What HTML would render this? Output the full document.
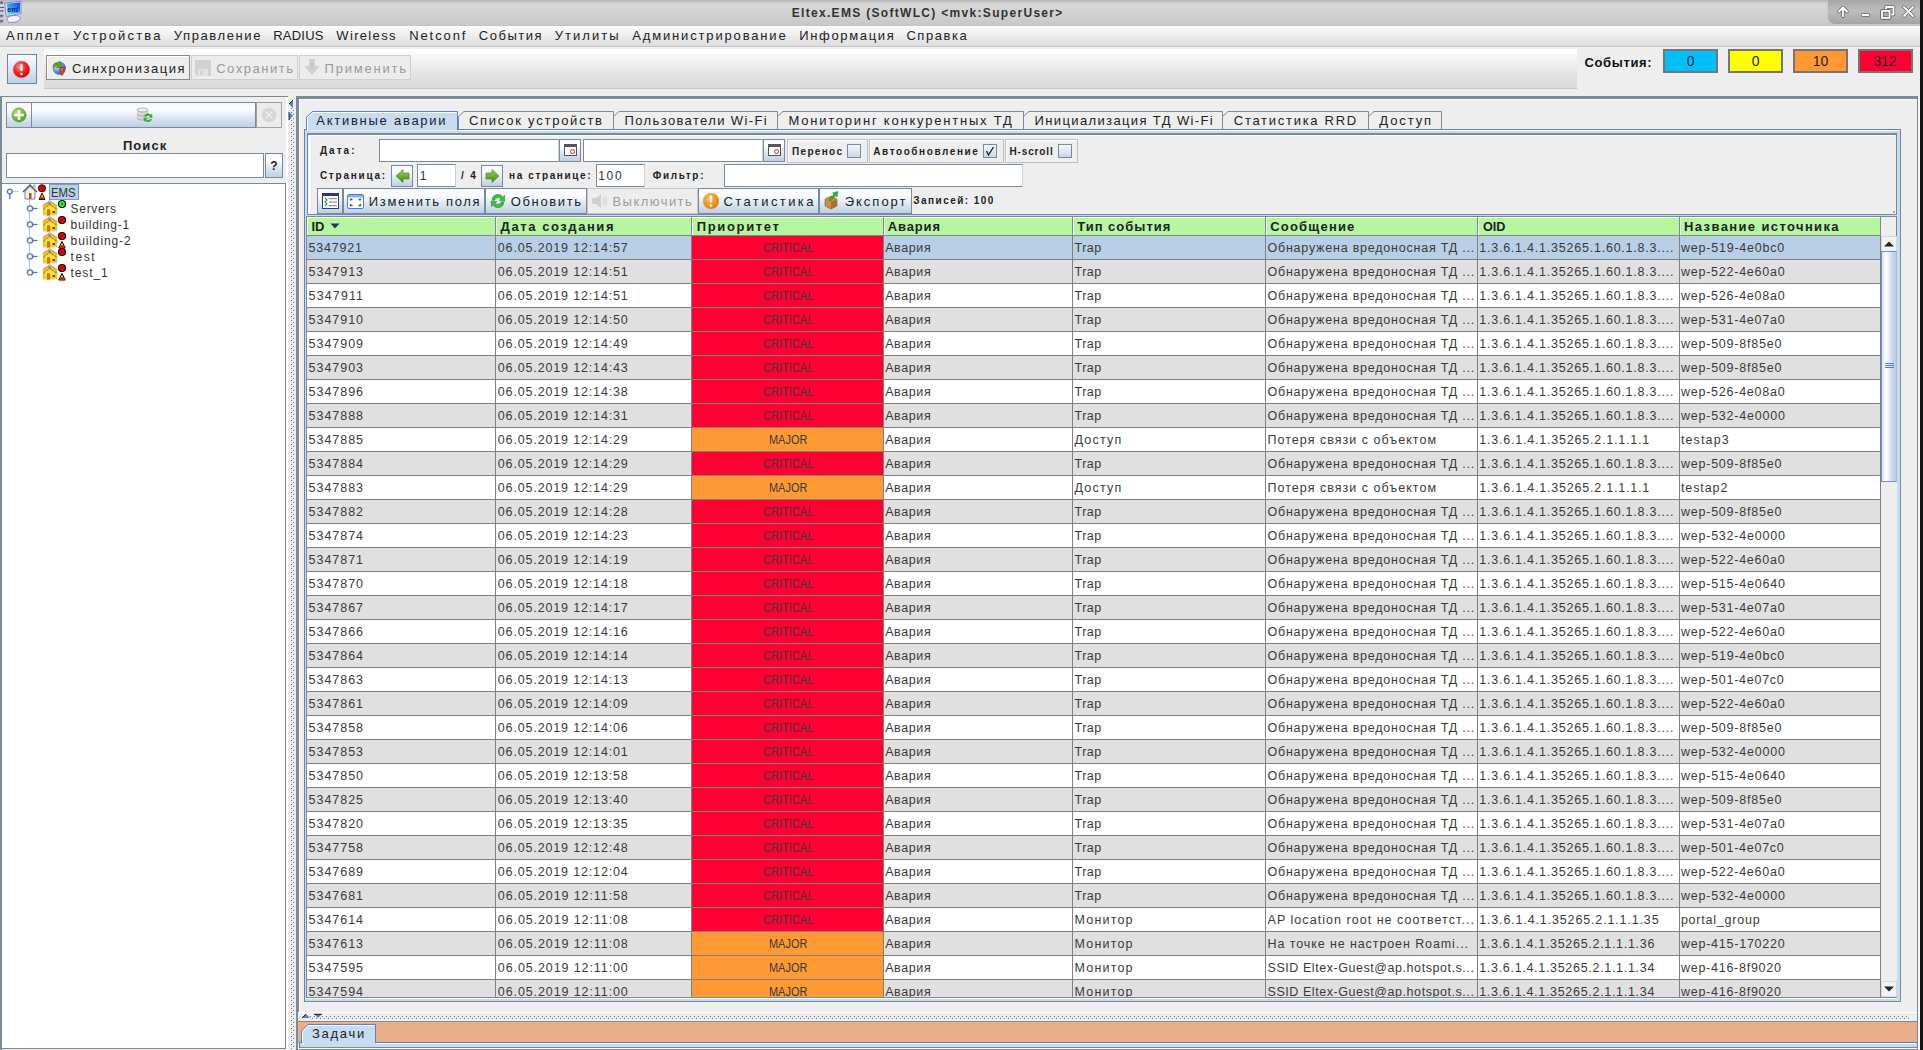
<!DOCTYPE html>
<html><head><meta charset="utf-8"><style>
html,body{margin:0;padding:0;}
body{width:1923px;height:1050px;overflow:hidden;background:#eeeeee;font-family:"Liberation Sans",sans-serif;}
#r{position:relative;width:1923px;height:1050px;overflow:hidden;background:#eeeeee;}
#r div{position:absolute;box-sizing:border-box;}
#r .t{white-space:pre;font-family:"Liberation Sans",sans-serif;}
</style></head><body><div id="r">
<div style="left:0px;top:0px;width:1923px;height:26px;background:linear-gradient(#b4b4b4 0px,#d8d8d8 4px,#d3d3d3 12px,#c8c8c8 25px,#c4c4c4 26px)"></div>
<svg style="position:absolute;left:0;top:0" width="24" height="26" viewBox="0 0 24 26">
<defs><linearGradient id="scr" x1="1" y1="0" x2="0" y2="1"><stop offset="0" stop-color="#0048e0"/><stop offset="0.6" stop-color="#30a8ff"/><stop offset="1" stop-color="#70e8ff"/></linearGradient></defs>
<text transform="translate(0.2,1) rotate(90)" font-size="6.2" font-weight="bold" fill="#383868" font-family="Liberation Sans" textLength="22" lengthAdjust="spacing">eltex</text>
<path d="M7 18.5 Q9 15.5 14 15.5 Q20 15.5 20.5 17.8 Q19 22.5 11 22.5 Q6.5 22.3 7 18.5 Z" fill="#f2f2ff" stroke="#8484c8" stroke-width="0.9"/>
<path d="M4.6 3.2 L21 1.2 L21 13.5 L6.2 16.5 Z" fill="#dcdcf8" stroke="#7c7cc4" stroke-width="0.9"/>
<path d="M7 3.8 L20 2.4 L20 12.6 L7.6 14.8 Z" fill="url(#scr)"/>
<text x="7.2" y="12.2" font-size="7.5" font-weight="bold" fill="#102058" font-family="Liberation Sans">em</text>
<text x="17" y="8.5" font-size="4" font-weight="bold" fill="#102058" font-family="Liberation Sans">s</text>
</svg>
<div class="t" style="left:791.70px;top:3px;font-size:12px;line-height:20px;color:#333;font-weight:bold;letter-spacing:1.312px;">Eltex.EMS (SoftWLC) &lt;mvk:SuperUser&gt;</div>
<div style="left:1828px;top:0px;width:92px;height:24px;background:linear-gradient(#a6a6a6,#bdbdbd 45%,#a4a4a4);border-bottom-left-radius:7px;box-shadow:-1px 1px 0 #c9c9c9"></div>
<svg style="position:absolute;left:1828px;top:0" width="92" height="24" viewBox="0 0 92 24">
<g fill="none" stroke="#6a6a6a" stroke-width="3.4" stroke-linejoin="round" stroke-linecap="round">
<path d="M15 16.2 V8.5 M11 11.5 L15 7.5 L19 11.5"/><path d="M34.5 15 H40.5"/>
<rect x="58" y="7" width="7.5" height="7.5"/><rect x="54" y="11" width="7.5" height="7"/>
<path d="M76 7 L85 16 M85 7 L76 16"/></g>
<g fill="none" stroke="#fff" stroke-width="1.8" stroke-linejoin="round" stroke-linecap="round">
<path d="M15 16.2 V8.5 M11 11.5 L15 7.5 L19 11.5"/><path d="M34.5 15 H40.5"/>
<rect x="58" y="7" width="7.5" height="7.5"/></g>
<rect x="54" y="11" width="7.5" height="7" fill="#b0b0b0" stroke="#6a6a6a" stroke-width="3.4" stroke-linejoin="round"/>
<rect x="54" y="11" width="7.5" height="7" fill="none" stroke="#fff" stroke-width="1.8"/>
<path d="M76 7 L85 16 M85 7 L76 16" fill="none" stroke="#fff" stroke-width="1.9" stroke-linecap="round"/>
</svg>
<div style="left:1920px;top:0px;width:3px;height:1050px;background:#141414"></div>
<div style="left:0px;top:26px;width:1920px;height:20px;background:linear-gradient(#fefefe,#f2f2f2 35%,#e6e6e6 70%,#dddddd)"></div>
<div style="left:0px;top:46px;width:1920px;height:1px;background:#c4c4c4"></div>
<div style="left:0px;top:47px;width:1920px;height:1px;background:#f4f4f4"></div>
<div class="t" style="left:6.00px;top:26px;font-size:13px;line-height:20px;color:#222;letter-spacing:2.021px;">Апплет</div>
<div class="t" style="left:72.90px;top:26px;font-size:13px;line-height:20px;color:#222;letter-spacing:2.172px;">Устройства</div>
<div class="t" style="left:173.70px;top:26px;font-size:13px;line-height:20px;color:#222;letter-spacing:1.613px;">Управление</div>
<div class="t" style="left:273.20px;top:26px;font-size:13px;line-height:20px;color:#222;letter-spacing:0.232px;">RADIUS</div>
<div class="t" style="left:336.30px;top:26px;font-size:13px;line-height:20px;color:#222;letter-spacing:1.335px;">Wireless</div>
<div class="t" style="left:409.20px;top:26px;font-size:13px;line-height:20px;color:#222;letter-spacing:1.908px;">Netconf</div>
<div class="t" style="left:478.70px;top:26px;font-size:13px;line-height:20px;color:#222;letter-spacing:1.552px;">События</div>
<div class="t" style="left:554.80px;top:26px;font-size:13px;line-height:20px;color:#222;letter-spacing:2.032px;">Утилиты</div>
<div class="t" style="left:632.20px;top:26px;font-size:13px;line-height:20px;color:#222;letter-spacing:1.847px;">Администрирование</div>
<div class="t" style="left:799.30px;top:26px;font-size:13px;line-height:20px;color:#222;letter-spacing:1.642px;">Информация</div>
<div class="t" style="left:906.40px;top:26px;font-size:13px;line-height:20px;color:#222;letter-spacing:1.546px;">Справка</div>
<div style="left:7px;top:54px;width:30px;height:30px;border:1px solid #6e84a0;background:linear-gradient(#f7fafd,#e4edf6 40%,#bcd0e6)"></div>
<svg style="position:absolute;left:12px;top:60px" width="19" height="19" viewBox="0 0 19 19">
<defs><radialGradient id="rg" cx="0.4" cy="0.35" r="0.7"><stop offset="0" stop-color="#ff9a9a"/><stop offset="0.5" stop-color="#f02828"/><stop offset="1" stop-color="#c80000"/></radialGradient></defs>
<circle cx="9.5" cy="9.5" r="8.3" fill="url(#rg)" stroke="#e06060" stroke-width="0.6"/>
<rect x="8.4" y="4" width="2.2" height="7" rx="1" fill="#fff"/><circle cx="9.5" cy="14" r="1.3" fill="#fff"/></svg>
<div style="left:44px;top:49px;width:1533px;height:40px;background:linear-gradient(#ffffff,#f2f2f2 30%,#e4e4e4 62%,#dadada 95%,#e8e8e8)"></div>
<div style="left:44px;top:88px;width:1533px;height:1px;background:#c6c6c6"></div>
<div style="left:46px;top:55px;width:144px;height:25px;border:1px solid #8a8a8a;background:#ededed;box-shadow:inset 1px 1px 0 #fff"></div>
<svg style="position:absolute;left:51px;top:59px" width="17" height="17" viewBox="0 0 17 17">
<defs><radialGradient id="gb" cx="0.35" cy="0.35" r="0.75"><stop offset="0" stop-color="#dfe8f8"/><stop offset="0.6" stop-color="#5f86c8"/><stop offset="1" stop-color="#2f4f90"/></radialGradient></defs>
<circle cx="8.2" cy="9.2" r="6.6" fill="url(#gb)"/>
<path d="M2 7.5 Q2.5 3 7 4.2 L9 2.2 L11.3 8.6 L5 8.6 L7 6.6 Q4.5 5.8 3.3 8 Z" fill="#58a818" stroke="#386808" stroke-width="0.5"/>
<path d="M9 8.6 L14.2 8.6 L12 11 Q14.5 13.5 11 16.5 L10 15.6 Q11.8 13 10.2 12 L9 13.5 Z" fill="#f06030" stroke="#901818" stroke-width="0.6"/></svg>
<div class="t" style="left:72.00px;top:59px;font-size:13px;line-height:20px;color:#222;letter-spacing:1.535px;">Синхронизация</div>
<div style="left:191px;top:55px;width:107px;height:25px;border:1px solid #cfcfcf;background:#ececec"></div>
<svg style="position:absolute;left:195px;top:60px" width="16" height="16" viewBox="0 0 16 16">
<path d="M0 0 H16 V16 H2 L0 14 Z" fill="#d2d2d2"/><rect x="3" y="9" width="10" height="7" fill="#e2e2e2"/><rect x="5" y="11" width="2" height="4" fill="#cfcfcf"/></svg>
<div class="t" style="left:216.20px;top:59px;font-size:13px;line-height:20px;color:#9a9a9a;letter-spacing:1.524px;">Сохранить</div>
<div style="left:299px;top:55px;width:112px;height:25px;border:1px solid #cfcfcf;background:#ececec"></div>
<svg style="position:absolute;left:303px;top:59px" width="18" height="17" viewBox="0 0 18 17">
<path d="M6 0 H12 V7 H17 L9 16 L1 7 H6 Z" fill="#d0d0d0"/><rect x="8.5" y="3" width="1" height="7" fill="#bbb"/></svg>
<div class="t" style="left:324.60px;top:59px;font-size:13px;line-height:20px;color:#9a9a9a;letter-spacing:1.782px;">Применить</div>
<div class="t" style="left:1584.60px;top:53px;font-size:13px;line-height:20px;color:#111;font-weight:bold;letter-spacing:0.596px;">События:</div>
<div style="left:1663px;top:49px;width:55px;height:24px;border:2px solid #777574;background:#00bfff"></div>
<div class="t" style="left:1686.80px;top:51px;font-size:14px;line-height:20px;color:#1a2626;font-family:"Liberation Mono",monospace;">0</div>
<div style="left:1728px;top:49px;width:55px;height:24px;border:2px solid #777574;background:#ffff00"></div>
<div class="t" style="left:1751.80px;top:51px;font-size:14px;line-height:20px;color:#1a2626;font-family:"Liberation Mono",monospace;">0</div>
<div style="left:1793px;top:49px;width:55px;height:24px;border:2px solid #777574;background:#ff9933"></div>
<div class="t" style="left:1812.70px;top:51px;font-size:14px;line-height:20px;color:#1a2626;font-family:"Liberation Mono",monospace;transform:scaleX(0.9881);transform-origin:0 0;">10</div>
<div style="left:1858px;top:49px;width:55px;height:24px;border:2px solid #777574;background:#ff0033"></div>
<div class="t" style="left:1873.30px;top:51px;font-size:14px;line-height:20px;color:#1a2626;font-family:"Liberation Mono",monospace;letter-spacing:0.100px;">312</div>
<div style="left:0px;top:96px;width:288px;height:1px;background:#7a8a99"></div>
<div style="left:0px;top:96px;width:2px;height:954px;background:#7a8a99"></div>
<div style="left:6px;top:102px;width:26px;height:26px;border:1px solid #7a8a99;background:linear-gradient(#f4f7fb,#ffffff 25%,#dde7f2 60%,#bdd0e5);"></div>
<svg style="position:absolute;left:11px;top:107px" width="16" height="16" viewBox="0 0 16 16">
<defs><radialGradient id="gg" cx="0.4" cy="0.35" r="0.7"><stop offset="0" stop-color="#b8e878"/><stop offset="1" stop-color="#4a9a18"/></radialGradient></defs>
<circle cx="8" cy="8" r="7.2" fill="url(#gg)" stroke="#5a8a38" stroke-width="0.7" stroke-dasharray="1 1"/>
<rect x="6.8" y="3.2" width="2.4" height="9.6" fill="#fff"/><rect x="3.2" y="6.8" width="9.6" height="2.4" fill="#fff"/></svg>
<div style="left:31px;top:102px;width:225px;height:26px;border:1px solid #7a8a99;background:linear-gradient(#f4f7fb,#ffffff 25%,#dde7f2 60%,#bdd0e5);"></div>
<svg style="position:absolute;left:136px;top:106px" width="17" height="18" viewBox="0 0 17 18">
<g fill="#d8d8d8" stroke="#909090" stroke-width="0.7"><ellipse cx="6.5" cy="12" rx="5.5" ry="2"/><rect x="1" y="8" width="11" height="4" stroke="none"/><ellipse cx="6.5" cy="8" rx="5.5" ry="2"/>
<rect x="1" y="4" width="11" height="4" stroke="none"/><ellipse cx="6.5" cy="4" rx="5.5" ry="2" fill="#f0f0f0"/></g>
<path d="M8 10 A4 4 0 0 1 15 9 L16 7 L16.5 12 L12 11.5 L14 10.5 A2.5 2.5 0 0 0 10 11 Z" fill="#3ab030"/>
<path d="M16 13 A4 4 0 0 1 9 14.5 L8 16.5 L7.5 11.5 L12 12 L10 13.2 A2.5 2.5 0 0 0 14 13 Z" fill="#3ab030"/></svg>
<div style="left:256px;top:102px;width:26px;height:26px;border:1px solid #a0a0a0;background:#ececec"></div>
<svg style="position:absolute;left:260.5px;top:107px" width="16" height="16" viewBox="0 0 16 16">
<circle cx="8" cy="8" r="7.3" fill="#d6d6d6"/><path d="M5 4 L8 7 L11 4 L12 5 L9 8 L12 11 L11 12 L8 9 L5 12 L4 11 L7 8 L4 5 Z" fill="#f0f0f0"/></svg>
<div class="t" style="left:122.90px;top:136px;font-size:13px;line-height:20px;color:#222;font-weight:bold;letter-spacing:1.084px;">Поиск</div>
<div style="left:6px;top:153px;width:258px;height:25px;border:1px solid #7a8a99;background:#fff"></div>
<div style="left:265px;top:153px;width:18px;height:25px;border:1px solid #7a8a99;background:linear-gradient(#f4f7fb,#ffffff 25%,#dde7f2 60%,#bdd0e5);"></div>
<div class="t" style="left:270.34px;top:156px;font-size:12px;line-height:20px;color:#222;font-weight:bold;">?</div>
<div style="left:2px;top:183px;width:284px;height:866px;border-top:1px solid #7a8a99;border-right:1px solid #7a8a99;border-bottom:1px solid #7a8a99;background:#fff"></div>
<div style="left:29px;top:199px;width:1px;height:74px;background:#b4c6e6"></div>
<svg style="position:absolute;left:6px;top:188px" width="14" height="12" viewBox="0 0 14 12">
<circle cx="3.8" cy="3.5" r="2.4" fill="none" stroke="#5577bb" stroke-width="1.4"/><rect x="3.1" y="5.5" width="1.4" height="5.5" fill="#5577bb"/>
<rect x="7" y="3" width="6" height="1" fill="#b8c8e8"/></svg>
<svg style="position:absolute;left:26px;top:204px" width="14" height="9" viewBox="0 0 14 9">
<circle cx="4" cy="4.5" r="2.6" fill="#fff" stroke="#5577bb" stroke-width="1.4"/><rect x="6.5" y="3.8" width="4.5" height="1.4" fill="#5577bb"/><rect x="11" y="4" width="2" height="1" fill="#c0d0ea"/></svg>
<svg style="position:absolute;left:26px;top:220px" width="14" height="9" viewBox="0 0 14 9">
<circle cx="4" cy="4.5" r="2.6" fill="#fff" stroke="#5577bb" stroke-width="1.4"/><rect x="6.5" y="3.8" width="4.5" height="1.4" fill="#5577bb"/><rect x="11" y="4" width="2" height="1" fill="#c0d0ea"/></svg>
<svg style="position:absolute;left:26px;top:236px" width="14" height="9" viewBox="0 0 14 9">
<circle cx="4" cy="4.5" r="2.6" fill="#fff" stroke="#5577bb" stroke-width="1.4"/><rect x="6.5" y="3.8" width="4.5" height="1.4" fill="#5577bb"/><rect x="11" y="4" width="2" height="1" fill="#c0d0ea"/></svg>
<svg style="position:absolute;left:26px;top:252px" width="14" height="9" viewBox="0 0 14 9">
<circle cx="4" cy="4.5" r="2.6" fill="#fff" stroke="#5577bb" stroke-width="1.4"/><rect x="6.5" y="3.8" width="4.5" height="1.4" fill="#5577bb"/><rect x="11" y="4" width="2" height="1" fill="#c0d0ea"/></svg>
<svg style="position:absolute;left:26px;top:268px" width="14" height="9" viewBox="0 0 14 9">
<circle cx="4" cy="4.5" r="2.6" fill="#fff" stroke="#5577bb" stroke-width="1.4"/><rect x="6.5" y="3.8" width="4.5" height="1.4" fill="#5577bb"/><rect x="11" y="4" width="2" height="1" fill="#c0d0ea"/></svg>
<svg style="position:absolute;left:22px;top:184px" width="26" height="16" viewBox="0 0 26 16">
<path d="M1 8 L8 1 L15 8" fill="none" stroke="#555" stroke-width="1.3"/><path d="M3 7 L8 2.5 L13 7 L13 15 L3 15 Z" fill="#f4f2ee" stroke="#666" stroke-width="0.8"/>
<rect x="7" y="9" width="2.5" height="6" fill="#b8541c"/><rect x="11.5" y="1" width="1.5" height="4" fill="#eee" stroke="#777" stroke-width="0.5"/>
<circle cx="20" cy="4.3" r="3.6" fill="#ee0000" stroke="#111" stroke-width="1"/><circle cx="20" cy="4.3" r="1" fill="#700"/>
<path d="M17 15.5 L20 9 L23 15.5 Z" fill="#f8c800" stroke="#111" stroke-width="1"/><path d="M17.6 15 L22.4 15 L21.5 13 L18.5 13 Z" fill="#e02020"/></svg>
<div style="left:49px;top:184px;width:30px;height:16px;background:#b8cfe5;border:1px solid #7a9ad0"></div>
<div class="t" style="left:50.50px;top:183px;font-size:12px;line-height:20px;color:#333;transform:scaleX(0.9430);transform-origin:0 0;">EMS</div>
<svg style="position:absolute;left:42px;top:200px" width="26" height="17" viewBox="0 0 26 17">
<path d="M1 5.6 L7.5 1 L15 5.6 L15.3 9.2 L15 15.6 L1 15.6 Z" fill="#ffc200"/>
<path d="M3 7.5 L7.5 4.6 L12.5 8 L12.5 13 L3 13 Z" fill="#ffdc3a"/>
<path d="M0.5 5.6 L7.5 0.8 L15 5.6 M1 9.2 L7.5 4.6 L15.6 9.6" fill="none" stroke="#56679a" stroke-width="0.9" stroke-dasharray="1.1 0.5"/>
<rect x="5" y="9.5" width="3" height="6" fill="#d07010"/><rect x="10.5" y="11" width="2.5" height="2" fill="#2050c0"/><rect x="6.8" y="2.8" width="1.6" height="1.6" fill="#2050c0"/>
<rect x="1.5" y="14.6" width="3" height="0.9" fill="#e8eef8"/><rect x="9" y="14.6" width="5.5" height="0.9" fill="#e8eef8"/>
<circle cx="20" cy="4" r="3.5" fill="#22ff22" stroke="#000" stroke-width="1.1"/><circle cx="20" cy="4" r="1" fill="#0a6a0a"/></svg>
<div class="t" style="left:70.60px;top:199px;font-size:12px;line-height:20px;color:#333;letter-spacing:0.677px;">Servers</div>
<svg style="position:absolute;left:42px;top:216px" width="26" height="17" viewBox="0 0 26 17">
<path d="M1 5.6 L7.5 1 L15 5.6 L15.3 9.2 L15 15.6 L1 15.6 Z" fill="#ffc200"/>
<path d="M3 7.5 L7.5 4.6 L12.5 8 L12.5 13 L3 13 Z" fill="#ffdc3a"/>
<path d="M0.5 5.6 L7.5 0.8 L15 5.6 M1 9.2 L7.5 4.6 L15.6 9.6" fill="none" stroke="#56679a" stroke-width="0.9" stroke-dasharray="1.1 0.5"/>
<rect x="5" y="9.5" width="3" height="6" fill="#d07010"/><rect x="10.5" y="11" width="2.5" height="2" fill="#2050c0"/><rect x="6.8" y="2.8" width="1.6" height="1.6" fill="#2050c0"/>
<rect x="1.5" y="14.6" width="3" height="0.9" fill="#e8eef8"/><rect x="9" y="14.6" width="5.5" height="0.9" fill="#e8eef8"/>
<circle cx="20" cy="4" r="3.5" fill="#ff0000" stroke="#000" stroke-width="1.1"/><circle cx="20" cy="4" r="1" fill="#6a0000"/></svg>
<div class="t" style="left:70.60px;top:215px;font-size:12px;line-height:20px;color:#333;letter-spacing:0.720px;">building-1</div>
<svg style="position:absolute;left:42px;top:232px" width="26" height="17" viewBox="0 0 26 17">
<path d="M1 5.6 L7.5 1 L15 5.6 L15.3 9.2 L15 15.6 L1 15.6 Z" fill="#ffc200"/>
<path d="M3 7.5 L7.5 4.6 L12.5 8 L12.5 13 L3 13 Z" fill="#ffdc3a"/>
<path d="M0.5 5.6 L7.5 0.8 L15 5.6 M1 9.2 L7.5 4.6 L15.6 9.6" fill="none" stroke="#56679a" stroke-width="0.9" stroke-dasharray="1.1 0.5"/>
<rect x="5" y="9.5" width="3" height="6" fill="#d07010"/><rect x="10.5" y="11" width="2.5" height="2" fill="#2050c0"/><rect x="6.8" y="2.8" width="1.6" height="1.6" fill="#2050c0"/>
<rect x="1.5" y="14.6" width="3" height="0.9" fill="#e8eef8"/><rect x="9" y="14.6" width="5.5" height="0.9" fill="#e8eef8"/>
<circle cx="20" cy="4" r="3.5" fill="#ff0000" stroke="#000" stroke-width="1.1"/><circle cx="20" cy="4" r="1" fill="#6a0000"/><path d="M16.8 16 L20 9.5 L23.2 16 Z" fill="#ffd000" stroke="#000" stroke-width="1"/><path d="M17.3 15.6 L22.7 15.6 L21.8 13.3 L18.2 13.3 Z" fill="#ee1010"/></svg>
<div class="t" style="left:70.60px;top:231px;font-size:12px;line-height:20px;color:#333;letter-spacing:0.887px;">building-2</div>
<svg style="position:absolute;left:42px;top:248px" width="26" height="17" viewBox="0 0 26 17">
<path d="M1 5.6 L7.5 1 L15 5.6 L15.3 9.2 L15 15.6 L1 15.6 Z" fill="#ffc200"/>
<path d="M3 7.5 L7.5 4.6 L12.5 8 L12.5 13 L3 13 Z" fill="#ffdc3a"/>
<path d="M0.5 5.6 L7.5 0.8 L15 5.6 M1 9.2 L7.5 4.6 L15.6 9.6" fill="none" stroke="#56679a" stroke-width="0.9" stroke-dasharray="1.1 0.5"/>
<rect x="5" y="9.5" width="3" height="6" fill="#d07010"/><rect x="10.5" y="11" width="2.5" height="2" fill="#2050c0"/><rect x="6.8" y="2.8" width="1.6" height="1.6" fill="#2050c0"/>
<rect x="1.5" y="14.6" width="3" height="0.9" fill="#e8eef8"/><rect x="9" y="14.6" width="5.5" height="0.9" fill="#e8eef8"/>
<circle cx="20" cy="4" r="3.5" fill="#ff0000" stroke="#000" stroke-width="1.1"/><circle cx="20" cy="4" r="1" fill="#6a0000"/></svg>
<div class="t" style="left:70.60px;top:247px;font-size:12px;line-height:20px;color:#333;letter-spacing:1.560px;">test</div>
<svg style="position:absolute;left:42px;top:264px" width="26" height="17" viewBox="0 0 26 17">
<path d="M1 5.6 L7.5 1 L15 5.6 L15.3 9.2 L15 15.6 L1 15.6 Z" fill="#ffc200"/>
<path d="M3 7.5 L7.5 4.6 L12.5 8 L12.5 13 L3 13 Z" fill="#ffdc3a"/>
<path d="M0.5 5.6 L7.5 0.8 L15 5.6 M1 9.2 L7.5 4.6 L15.6 9.6" fill="none" stroke="#56679a" stroke-width="0.9" stroke-dasharray="1.1 0.5"/>
<rect x="5" y="9.5" width="3" height="6" fill="#d07010"/><rect x="10.5" y="11" width="2.5" height="2" fill="#2050c0"/><rect x="6.8" y="2.8" width="1.6" height="1.6" fill="#2050c0"/>
<rect x="1.5" y="14.6" width="3" height="0.9" fill="#e8eef8"/><rect x="9" y="14.6" width="5.5" height="0.9" fill="#e8eef8"/>
<circle cx="20" cy="4" r="3.5" fill="#ff0000" stroke="#000" stroke-width="1.1"/><circle cx="20" cy="4" r="1" fill="#6a0000"/><path d="M16.8 16 L20 9.5 L23.2 16 Z" fill="#ffd000" stroke="#000" stroke-width="1"/><path d="M17.3 15.6 L22.7 15.6 L21.8 13.3 L18.2 13.3 Z" fill="#ee1010"/></svg>
<div class="t" style="left:70.60px;top:263px;font-size:12px;line-height:20px;color:#333;letter-spacing:0.860px;">test_1</div>
<svg style="position:absolute;left:286px;top:96px" width="10" height="954" viewBox="0 0 10 954">
<defs><pattern id="dv" x="0" y="0" width="4" height="4" patternUnits="userSpaceOnUse">
<rect x="1" y="0" width="1" height="1" fill="#6a7a8a"/><rect x="2" y="1" width="1" height="1" fill="#ffffff"/>
<rect x="3" y="2" width="1" height="1" fill="#6a7a8a"/><rect x="0" y="3" width="1" height="1" fill="#ffffff"/></pattern></defs>
<rect x="0" y="1" width="2" height="953" fill="#fcfcfc"/>
<rect x="4" y="12" width="4" height="942" fill="url(#dv)"/>
<path d="M7 4 L3 8 L7 12 Z" fill="#5a7cc0"/><path d="M3 8 L7 4" stroke="#111" stroke-width="0.9"/>
<path d="M3 16 L7 20 L3 24 Z" fill="#5a7cc0"/><path d="M3 16 L3 24" stroke="#111" stroke-width="0.8"/>
</svg>
<div style="left:296px;top:96px;width:3px;height:916px;background:#7a8a99"></div>
<div style="left:296px;top:96px;width:1623px;height:3px;background:#7a8a99"></div>
<div style="left:1917px;top:96px;width:1px;height:954px;background:#7a8a99"></div>
<div style="left:1918px;top:96px;width:2px;height:954px;background:#f8f8f8"></div>
<div style="left:299px;top:99px;width:1px;height:913px;background:#fbfbfb"></div>
<div style="left:299px;top:99px;width:1617px;height:1px;background:#fbfbfb"></div>
<div style="left:304px;top:129px;width:1597px;height:873px;border:1px solid #5f80c6;border-right-color:#7a8a99;border-bottom-color:#7a8a99;background:#c8dcf1"></div>
<div style="left:305px;top:130px;width:1595px;height:1px;background:#fff"></div>
<svg style="position:absolute;left:300px;top:105px" width="1160" height="30" viewBox="300 105 1160 30"><path d="M306.5 130.5 L306.5 117 L312.5 111.5 L457.5 111.5 L457.5 130.5" fill="#c8dcf1" stroke="#5f80c6" stroke-width="1"/><path d="M307.5 131 L307.5 117.5 L313 112.5 L456.5 112.5" fill="none" stroke="#fff" stroke-width="1"/><path d="M458.5 129.5 L458.5 116.5 L464.0 111.5 L613.5 111.5 L613.5 129.5" fill="#eeeeee" stroke="#7a8a99" stroke-width="1"/><path d="M613.5 129.5 L613.5 116.5 L619.0 111.5 L777.5 111.5 L777.5 129.5" fill="#eeeeee" stroke="#7a8a99" stroke-width="1"/><path d="M777.5 129.5 L777.5 116.5 L783.0 111.5 L1023.5 111.5 L1023.5 129.5" fill="#eeeeee" stroke="#7a8a99" stroke-width="1"/><path d="M1023.5 129.5 L1023.5 116.5 L1029.0 111.5 L1222.5 111.5 L1222.5 129.5" fill="#eeeeee" stroke="#7a8a99" stroke-width="1"/><path d="M1222.5 129.5 L1222.5 116.5 L1228.0 111.5 L1368.5 111.5 L1368.5 129.5" fill="#eeeeee" stroke="#7a8a99" stroke-width="1"/><path d="M1368.5 129.5 L1368.5 116.5 L1374.0 111.5 L1441.5 111.5 L1441.5 129.5" fill="#eeeeee" stroke="#7a8a99" stroke-width="1"/></svg>
<div style="left:458px;top:129px;width:1443px;height:1px;background:#5f80c6"></div>
<div style="left:458px;top:130px;width:1442px;height:1px;background:#fff"></div>
<div class="t" style="left:316.30px;top:111px;font-size:13px;line-height:20px;color:#222;letter-spacing:1.738px;">Активные аварии</div>
<div class="t" style="left:468.90px;top:111px;font-size:13px;line-height:20px;color:#222;letter-spacing:1.758px;">Список устройств</div>
<div class="t" style="left:624.60px;top:111px;font-size:13px;line-height:20px;color:#222;letter-spacing:1.367px;">Пользователи Wi-Fi</div>
<div class="t" style="left:788.40px;top:111px;font-size:13px;line-height:20px;color:#222;letter-spacing:1.793px;">Мониторинг конкурентных ТД</div>
<div class="t" style="left:1034.60px;top:111px;font-size:13px;line-height:20px;color:#222;letter-spacing:1.368px;">Инициализация ТД Wi-Fi</div>
<div class="t" style="left:1233.80px;top:111px;font-size:13px;line-height:20px;color:#222;letter-spacing:1.720px;">Статистика RRD</div>
<div class="t" style="left:1379.30px;top:111px;font-size:13px;line-height:20px;color:#222;letter-spacing:1.897px;">Доступ</div>
<div style="left:307px;top:133px;width:1590px;height:82px;border:1px solid #7a8a99;border-width:2px 1px 1px 1px;background:#eeeeee"></div>
<div style="left:309px;top:135px;width:1585px;height:1px;background:#fff"></div>
<div style="left:309px;top:135px;width:1px;height:79px;background:#fff"></div>
<div class="t" style="left:319.90px;top:141px;font-size:10px;line-height:20px;color:#222;font-weight:bold;letter-spacing:2.025px;">Дата:</div>
<div style="left:379px;top:139px;width:180px;height:23px;border:1px solid #7a8a99;border-right-color:#c8d0d8;background:#fff"></div>
<div style="left:559px;top:139px;width:22px;height:23px;border:1px solid #7a8a99;background:linear-gradient(#f4f7fb,#ffffff 25%,#dde7f2 60%,#bdd0e5);"></div>
<svg style="position:absolute;left:564px;top:144px" width="13" height="12" viewBox="0 0 13 12">
<rect x="0.5" y="0.5" width="12" height="11" fill="#fff" stroke="#555" stroke-width="1"/><rect x="1" y="1" width="11" height="2" fill="#555"/><circle cx="8.5" cy="7.5" r="2" fill="none" stroke="#e02020" stroke-width="1"/></svg>
<div style="left:583px;top:139px;width:180px;height:23px;border:1px solid #7a8a99;border-right-color:#c8d0d8;background:#fff"></div>
<div style="left:763px;top:139px;width:22px;height:23px;border:1px solid #7a8a99;background:linear-gradient(#f4f7fb,#ffffff 25%,#dde7f2 60%,#bdd0e5);"></div>
<svg style="position:absolute;left:768px;top:144px" width="13" height="12" viewBox="0 0 13 12">
<rect x="0.5" y="0.5" width="12" height="11" fill="#fff" stroke="#555" stroke-width="1"/><rect x="1" y="1" width="11" height="2" fill="#555"/><circle cx="8.5" cy="7.5" r="2" fill="none" stroke="#e02020" stroke-width="1"/></svg>
<div style="left:787px;top:139px;width:81px;height:24px;border:1px solid #b8c0c8;background:#eeeeee;box-shadow:inset 1px 1px 0 #fff"></div>
<div class="t" style="left:792.00px;top:142px;font-size:10px;line-height:20px;color:#222;font-weight:bold;letter-spacing:1.333px;">Перенос</div>
<div style="left:847px;top:144px;width:14px;height:14px;border:1px solid #7a8a99;background:linear-gradient(#f4f8fc,#c8d8ea)"></div>
<div style="left:869px;top:139px;width:135px;height:24px;border:1px solid #b8c0c8;background:#eeeeee;box-shadow:inset 1px 1px 0 #fff"></div>
<div class="t" style="left:873.30px;top:142px;font-size:10px;line-height:20px;color:#222;font-weight:bold;letter-spacing:1.569px;">Автообновление</div>
<div style="left:983px;top:144px;width:14px;height:14px;border:1px solid #7a8a99;background:linear-gradient(#f4f8fc,#c8d8ea)"></div>
<svg style="position:absolute;left:983px;top:144px" width="14" height="14" viewBox="0 0 14 14"><path d="M3.5 7 L5.5 11 L10.5 3" fill="none" stroke="#1a1a1a" stroke-width="1.3"/></svg>
<div style="left:1005px;top:139px;width:73px;height:24px;border:1px solid #b8c0c8;background:#eeeeee;box-shadow:inset 1px 1px 0 #fff"></div>
<div class="t" style="left:1009.50px;top:142px;font-size:10px;line-height:20px;color:#222;font-weight:bold;letter-spacing:0.850px;">H-scroll</div>
<div style="left:1058px;top:144px;width:14px;height:14px;border:1px solid #7a8a99;background:linear-gradient(#f4f8fc,#c8d8ea)"></div>
<div class="t" style="left:319.90px;top:166px;font-size:10px;line-height:20px;color:#222;font-weight:bold;letter-spacing:1.756px;">Страница:</div>
<div style="left:391px;top:165px;width:22px;height:22px;border:1px solid #7a8a99;background:linear-gradient(#f4f7fb,#ffffff 25%,#dde7f2 60%,#bdd0e5);"></div>
<svg style="position:absolute;left:394px;top:168px" width="17" height="16" viewBox="0 0 17 16">
<defs><linearGradient id="ag391" x1="0" y1="0" x2="0" y2="1"><stop offset="0" stop-color="#9ad860"/><stop offset="1" stop-color="#3a8a10"/></linearGradient></defs>
<path d="M2 8 L9 1.5 L9 5 L15 5 L15 11 L9 11 L9 14.5 Z" fill="url(#ag391)" stroke="#3a7a18" stroke-width="0.6"/></svg>
<div style="left:417px;top:164px;width:39px;height:23px;border:1px solid #7a8a99;border-right-color:#c8d0d8;background:#fff"></div>
<div class="t" style="left:419.70px;top:166px;font-size:12px;line-height:20px;color:#333;">1</div>
<div class="t" style="left:461.00px;top:166px;font-size:10px;line-height:20px;color:#222;font-weight:bold;letter-spacing:1.900px;">/ 4</div>
<div style="left:481px;top:165px;width:22px;height:22px;border:1px solid #7a8a99;background:linear-gradient(#f4f7fb,#ffffff 25%,#dde7f2 60%,#bdd0e5);"></div>
<svg style="position:absolute;left:484px;top:168px" width="17" height="16" viewBox="0 0 17 16">
<defs><linearGradient id="ag481" x1="0" y1="0" x2="0" y2="1"><stop offset="0" stop-color="#9ad860"/><stop offset="1" stop-color="#3a8a10"/></linearGradient></defs>
<path d="M15 8 L8 1.5 L8 5 L2 5 L2 11 L8 11 L8 14.5 Z" fill="url(#ag481)" stroke="#3a7a18" stroke-width="0.6"/></svg>
<div class="t" style="left:509.00px;top:166px;font-size:10px;line-height:20px;color:#222;font-weight:bold;letter-spacing:1.614px;">на странице:</div>
<div style="left:596px;top:164px;width:49px;height:23px;border:1px solid #7a8a99;border-right-color:#c8d0d8;background:#fff"></div>
<div class="t" style="left:598.20px;top:166px;font-size:12px;line-height:20px;color:#333;letter-spacing:1.680px;">100</div>
<div class="t" style="left:652.80px;top:166px;font-size:10px;line-height:20px;color:#222;font-weight:bold;letter-spacing:1.675px;">Фильтр:</div>
<div style="left:724px;top:164px;width:299px;height:23px;border:1px solid #7a8a99;border-right-color:#c8d0d8;background:#fff"></div>
<div style="left:317px;top:188px;width:595px;height:26px;background:#eeeeee"></div>
<div style="left:317px;top:188px;width:26px;height:26px;border:1px solid #7a8a99;background:linear-gradient(#f4f7fb,#ffffff 25%,#dde7f2 60%,#bdd0e5);"></div>
<div style="left:343px;top:188px;width:142px;height:26px;border:1px solid #7a8a99;background:linear-gradient(#f4f7fb,#ffffff 25%,#dde7f2 60%,#bdd0e5);"></div>
<div style="left:485px;top:188px;width:102px;height:26px;border:1px solid #7a8a99;background:linear-gradient(#f4f7fb,#ffffff 25%,#dde7f2 60%,#bdd0e5);"></div>
<div style="left:587px;top:188px;width:111px;height:26px;border:1px solid #c4c8cc;background:#ededed"></div>
<div style="left:698px;top:188px;width:121px;height:26px;border:1px solid #7a8a99;background:linear-gradient(#f4f7fb,#ffffff 25%,#dde7f2 60%,#bdd0e5);"></div>
<div style="left:819px;top:188px;width:93px;height:26px;border:1px solid #7a8a99;background:linear-gradient(#f4f7fb,#ffffff 25%,#dde7f2 60%,#bdd0e5);"></div>
<svg style="position:absolute;left:322px;top:193px" width="17" height="16" viewBox="0 0 17 16">
<rect x="0.5" y="0.5" width="16" height="15" fill="#fff" stroke="#2a3a7a" stroke-width="1"/><rect x="1" y="1" width="15" height="2" fill="#2a3a7a"/>
<path d="M3 5 L5 7 L3 9 L5 11 L3 13" fill="none" stroke="#2a9a2a" stroke-width="1.1"/><rect x="7" y="5" width="8" height="1.2" fill="#8888aa"/><rect x="7" y="8.5" width="8" height="1.2" fill="#8888aa"/><rect x="7" y="12" width="8" height="1.2" fill="#8888aa"/></svg>
<svg style="position:absolute;left:347px;top:193px" width="17" height="16" viewBox="0 0 17 16">
<rect x="0.5" y="1.5" width="16" height="14" rx="1.5" fill="#fff" stroke="#4a7ad8" stroke-width="1"/><rect x="1" y="2" width="15" height="2.5" fill="#8ab0ea"/>
<path d="M3.5 7.5 V6.5 H5.5 M11.5 6.5 H13.5 V7.5 M13.5 11 V12.5 H11.5 M5.5 12.5 H3.5 V11" fill="none" stroke="#1a7a1a" stroke-width="1.3"/></svg>
<div class="t" style="left:368.80px;top:192px;font-size:13px;line-height:20px;color:#222;letter-spacing:1.661px;">Изменить поля</div>
<svg style="position:absolute;left:490px;top:193px" width="16" height="16" viewBox="0 0 16 16">
<path d="M2 7 A6 6 0 0 1 13 4 L14.5 2 L15 8 L9 7.5 L11 6 A3.8 3.8 0 0 0 4.5 7.5 Z" fill="#3cc03c" stroke="#2a8a2a" stroke-width="0.5"/>
<path d="M14 9 A6 6 0 0 1 3 12 L1.5 14 L1 8 L7 8.5 L5 10 A3.8 3.8 0 0 0 11.5 8.5 Z" fill="#3cc03c" stroke="#2a8a2a" stroke-width="0.5"/></svg>
<div class="t" style="left:510.80px;top:192px;font-size:13px;line-height:20px;color:#222;letter-spacing:1.616px;">Обновить</div>
<svg style="position:absolute;left:591px;top:193px" width="18" height="16" viewBox="0 0 18 16">
<path d="M1 5 H5 L10 1 V15 L5 11 H1 Z" fill="#d0d0d0"/><path d="M12 5 Q14 8 12 11 M14 3 Q17 8 14 13" fill="none" stroke="#d4d4d4" stroke-width="1.3"/></svg>
<div class="t" style="left:612.50px;top:192px;font-size:13px;line-height:20px;color:#9c9c9c;letter-spacing:1.454px;">Выключить</div>
<svg style="position:absolute;left:702px;top:192px" width="18" height="18" viewBox="0 0 18 18">
<defs><radialGradient id="og" cx="0.4" cy="0.35" r="0.7"><stop offset="0" stop-color="#ffc060"/><stop offset="1" stop-color="#e07800"/></radialGradient></defs>
<circle cx="9" cy="9" r="8" fill="url(#og)"/><rect x="7.8" y="3.5" width="2.4" height="7" rx="1" fill="#fff"/><circle cx="9" cy="13.5" r="1.3" fill="#fff"/></svg>
<div class="t" style="left:723.50px;top:192px;font-size:13px;line-height:20px;color:#222;letter-spacing:2.409px;">Статистика</div>
<svg style="position:absolute;left:823px;top:191px" width="17" height="19" viewBox="0 0 17 19">
<path d="M2 8 L8 5 L14 8 L14 15 L8 18 L2 15 Z" fill="#c89040" stroke="#8a5a20" stroke-width="0.6"/><path d="M8 11 L8 18 L14 15 L14 8 Z" fill="#a87030"/>
<path d="M6 9 L11 3 L9.5 2 L15 0.5 L14 6 L12.8 4.5 L7.5 10 Z" fill="#3ab03a" stroke="#1a7a1a" stroke-width="0.5"/></svg>
<div class="t" style="left:844.70px;top:192px;font-size:13px;line-height:20px;color:#222;letter-spacing:1.997px;">Экспорт</div>
<div class="t" style="left:913.30px;top:191px;font-size:10px;line-height:20px;color:#222;font-weight:bold;letter-spacing:1.455px;">Записей: 100</div>
<div style="left:1893px;top:211px;width:2px;height:2px;background:#aaa"></div>
<div style="left:306px;top:216px;width:1591px;height:782px;border:1px solid #7a8a99;border-bottom:none;background:#eeeeee"></div>
<div style="left:307px;top:217px;width:1574px;height:19px;background:#b7f5a1;border-top:1px solid #fff;border-bottom:1px solid #7c8c8c"></div>
<div style="left:307px;top:217px;width:1px;height:18px;background:#fff"></div>
<div style="left:495px;top:216px;width:1px;height:20px;background:#7a8a99"></div>
<div class="t" style="left:311.40px;top:217px;font-size:13px;line-height:20px;color:#222;font-weight:bold;letter-spacing:0.100px;">ID</div>
<div style="left:496px;top:217px;width:1px;height:18px;background:#fff"></div>
<div style="left:691px;top:216px;width:1px;height:20px;background:#7a8a99"></div>
<div class="t" style="left:500.60px;top:217px;font-size:13px;line-height:20px;color:#222;font-weight:bold;letter-spacing:1.570px;">Дата создания</div>
<div style="left:692px;top:217px;width:1px;height:18px;background:#fff"></div>
<div style="left:883px;top:216px;width:1px;height:20px;background:#7a8a99"></div>
<div class="t" style="left:696.80px;top:217px;font-size:13px;line-height:20px;color:#222;font-weight:bold;letter-spacing:1.642px;">Приоритет</div>
<div style="left:884px;top:217px;width:1px;height:18px;background:#fff"></div>
<div style="left:1072px;top:216px;width:1px;height:20px;background:#7a8a99"></div>
<div class="t" style="left:887.70px;top:217px;font-size:13px;line-height:20px;color:#222;font-weight:bold;letter-spacing:0.886px;">Авария</div>
<div style="left:1073px;top:217px;width:1px;height:18px;background:#fff"></div>
<div style="left:1265px;top:216px;width:1px;height:20px;background:#7a8a99"></div>
<div class="t" style="left:1077.20px;top:217px;font-size:13px;line-height:20px;color:#222;font-weight:bold;letter-spacing:1.006px;">Тип события</div>
<div style="left:1266px;top:217px;width:1px;height:18px;background:#fff"></div>
<div style="left:1477px;top:216px;width:1px;height:20px;background:#7a8a99"></div>
<div class="t" style="left:1270.30px;top:217px;font-size:13px;line-height:20px;color:#222;font-weight:bold;letter-spacing:1.181px;">Сообщение</div>
<div style="left:1478px;top:217px;width:1px;height:18px;background:#fff"></div>
<div style="left:1679px;top:216px;width:1px;height:20px;background:#7a8a99"></div>
<div class="t" style="left:1482.60px;top:217px;font-size:13px;line-height:20px;color:#222;font-weight:bold;transform:scaleX(0.9723);transform-origin:0 0;">OID</div>
<div style="left:1680px;top:217px;width:1px;height:18px;background:#fff"></div>
<div style="left:1880px;top:216px;width:1px;height:20px;background:#7a8a99"></div>
<div class="t" style="left:1684.10px;top:217px;font-size:13px;line-height:20px;color:#222;font-weight:bold;letter-spacing:1.374px;">Название источника</div>
<svg style="position:absolute;left:330px;top:223px" width="10" height="6" viewBox="0 0 10 6"><path d="M0.5 0.5 L9.5 0.5 L5 5.5 Z" fill="#223a5a"/></svg>
<div style="left:307px;top:236px;width:1574px;height:761px;overflow:hidden">
<div style="left:0px;top:0px;width:1573px;height:23px;background:#b8cfe5"></div>
<div style="left:0px;top:23px;width:1573px;height:1px;background:#808080"></div>
<div style="left:385px;top:0px;width:191px;height:23px;background:#ff0033"></div>
<div style="left:188px;top:0px;width:1px;height:24px;background:#808080"></div>
<div style="left:384px;top:0px;width:1px;height:24px;background:#808080"></div>
<div style="left:576px;top:0px;width:1px;height:24px;background:#808080"></div>
<div style="left:765px;top:0px;width:1px;height:24px;background:#808080"></div>
<div style="left:958px;top:0px;width:1px;height:24px;background:#808080"></div>
<div style="left:1170px;top:0px;width:1px;height:24px;background:#808080"></div>
<div style="left:1372px;top:0px;width:1px;height:24px;background:#808080"></div>
<div style="left:1573px;top:0px;width:1px;height:24px;background:#808080"></div>
<div class="t" style="left:1.60px;top:2px;font-size:12.5px;line-height:20px;color:#3a3a3a;letter-spacing:0.802px;">5347921</div>
<div class="t" style="left:190.80px;top:2px;font-size:12.5px;line-height:20px;color:#3a3a3a;letter-spacing:0.851px;">06.05.2019 12:14:57</div>
<div class="t" style="left:455.55px;top:2px;font-size:12.5px;line-height:20px;color:#3a3a3a;transform:scaleX(0.8834);transform-origin:0 0;">CRITICAL</div>
<div class="t" style="left:578.20px;top:2px;font-size:12.5px;line-height:20px;color:#3a3a3a;letter-spacing:0.600px;">Авария</div>
<div class="t" style="left:767.50px;top:2px;font-size:12.5px;line-height:20px;color:#3a3a3a;letter-spacing:0.483px;">Trap</div>
<div class="t" style="left:960.50px;top:2px;font-size:12.5px;line-height:20px;color:#3a3a3a;letter-spacing:0.779px;">Обнаружена вредоносная ТД ...</div>
<div class="t" style="left:1172.20px;top:2px;font-size:12.5px;line-height:20px;color:#3a3a3a;letter-spacing:0.776px;">1.3.6.1.4.1.35265.1.60.1.8.3....</div>
<div class="t" style="left:1373.96px;top:2px;font-size:12.5px;line-height:20px;color:#3a3a3a;letter-spacing:0.786px;">wep-519-4e0bc0</div>
<div style="left:0px;top:24px;width:1573px;height:23px;background:#e0e0e0"></div>
<div style="left:0px;top:47px;width:1573px;height:1px;background:#808080"></div>
<div style="left:385px;top:24px;width:191px;height:23px;background:#ff0033"></div>
<div style="left:188px;top:24px;width:1px;height:24px;background:#808080"></div>
<div style="left:384px;top:24px;width:1px;height:24px;background:#808080"></div>
<div style="left:576px;top:24px;width:1px;height:24px;background:#808080"></div>
<div style="left:765px;top:24px;width:1px;height:24px;background:#808080"></div>
<div style="left:958px;top:24px;width:1px;height:24px;background:#808080"></div>
<div style="left:1170px;top:24px;width:1px;height:24px;background:#808080"></div>
<div style="left:1372px;top:24px;width:1px;height:24px;background:#808080"></div>
<div style="left:1573px;top:24px;width:1px;height:24px;background:#808080"></div>
<div class="t" style="left:1.60px;top:26px;font-size:12.5px;line-height:20px;color:#3a3a3a;letter-spacing:0.963px;">5347913</div>
<div class="t" style="left:190.80px;top:26px;font-size:12.5px;line-height:20px;color:#3a3a3a;letter-spacing:0.851px;">06.05.2019 12:14:51</div>
<div class="t" style="left:455.55px;top:26px;font-size:12.5px;line-height:20px;color:#3a3a3a;transform:scaleX(0.8834);transform-origin:0 0;">CRITICAL</div>
<div class="t" style="left:578.20px;top:26px;font-size:12.5px;line-height:20px;color:#3a3a3a;letter-spacing:0.600px;">Авария</div>
<div class="t" style="left:767.50px;top:26px;font-size:12.5px;line-height:20px;color:#3a3a3a;letter-spacing:0.483px;">Trap</div>
<div class="t" style="left:960.50px;top:26px;font-size:12.5px;line-height:20px;color:#3a3a3a;letter-spacing:0.779px;">Обнаружена вредоносная ТД ...</div>
<div class="t" style="left:1172.20px;top:26px;font-size:12.5px;line-height:20px;color:#3a3a3a;letter-spacing:0.776px;">1.3.6.1.4.1.35265.1.60.1.8.3....</div>
<div class="t" style="left:1373.96px;top:26px;font-size:12.5px;line-height:20px;color:#3a3a3a;letter-spacing:0.758px;">wep-522-4e60a0</div>
<div style="left:0px;top:48px;width:1573px;height:23px;background:#ffffff"></div>
<div style="left:0px;top:71px;width:1573px;height:1px;background:#808080"></div>
<div style="left:385px;top:48px;width:191px;height:23px;background:#ff0033"></div>
<div style="left:188px;top:48px;width:1px;height:24px;background:#808080"></div>
<div style="left:384px;top:48px;width:1px;height:24px;background:#808080"></div>
<div style="left:576px;top:48px;width:1px;height:24px;background:#808080"></div>
<div style="left:765px;top:48px;width:1px;height:24px;background:#808080"></div>
<div style="left:958px;top:48px;width:1px;height:24px;background:#808080"></div>
<div style="left:1170px;top:48px;width:1px;height:24px;background:#808080"></div>
<div style="left:1372px;top:48px;width:1px;height:24px;background:#808080"></div>
<div style="left:1573px;top:48px;width:1px;height:24px;background:#808080"></div>
<div class="t" style="left:1.60px;top:50px;font-size:12.5px;line-height:20px;color:#3a3a3a;letter-spacing:1.120px;">5347911</div>
<div class="t" style="left:190.80px;top:50px;font-size:12.5px;line-height:20px;color:#3a3a3a;letter-spacing:0.851px;">06.05.2019 12:14:51</div>
<div class="t" style="left:455.55px;top:50px;font-size:12.5px;line-height:20px;color:#3a3a3a;transform:scaleX(0.8834);transform-origin:0 0;">CRITICAL</div>
<div class="t" style="left:578.20px;top:50px;font-size:12.5px;line-height:20px;color:#3a3a3a;letter-spacing:0.600px;">Авария</div>
<div class="t" style="left:767.50px;top:50px;font-size:12.5px;line-height:20px;color:#3a3a3a;letter-spacing:0.483px;">Trap</div>
<div class="t" style="left:960.50px;top:50px;font-size:12.5px;line-height:20px;color:#3a3a3a;letter-spacing:0.779px;">Обнаружена вредоносная ТД ...</div>
<div class="t" style="left:1172.20px;top:50px;font-size:12.5px;line-height:20px;color:#3a3a3a;letter-spacing:0.776px;">1.3.6.1.4.1.35265.1.60.1.8.3....</div>
<div class="t" style="left:1373.96px;top:50px;font-size:12.5px;line-height:20px;color:#3a3a3a;letter-spacing:0.758px;">wep-526-4e08a0</div>
<div style="left:0px;top:72px;width:1573px;height:23px;background:#e0e0e0"></div>
<div style="left:0px;top:95px;width:1573px;height:1px;background:#808080"></div>
<div style="left:385px;top:72px;width:191px;height:23px;background:#ff0033"></div>
<div style="left:188px;top:72px;width:1px;height:24px;background:#808080"></div>
<div style="left:384px;top:72px;width:1px;height:24px;background:#808080"></div>
<div style="left:576px;top:72px;width:1px;height:24px;background:#808080"></div>
<div style="left:765px;top:72px;width:1px;height:24px;background:#808080"></div>
<div style="left:958px;top:72px;width:1px;height:24px;background:#808080"></div>
<div style="left:1170px;top:72px;width:1px;height:24px;background:#808080"></div>
<div style="left:1372px;top:72px;width:1px;height:24px;background:#808080"></div>
<div style="left:1573px;top:72px;width:1px;height:24px;background:#808080"></div>
<div class="t" style="left:1.60px;top:74px;font-size:12.5px;line-height:20px;color:#3a3a3a;letter-spacing:0.963px;">5347910</div>
<div class="t" style="left:190.80px;top:74px;font-size:12.5px;line-height:20px;color:#3a3a3a;letter-spacing:0.851px;">06.05.2019 12:14:50</div>
<div class="t" style="left:455.55px;top:74px;font-size:12.5px;line-height:20px;color:#3a3a3a;transform:scaleX(0.8834);transform-origin:0 0;">CRITICAL</div>
<div class="t" style="left:578.20px;top:74px;font-size:12.5px;line-height:20px;color:#3a3a3a;letter-spacing:0.600px;">Авария</div>
<div class="t" style="left:767.50px;top:74px;font-size:12.5px;line-height:20px;color:#3a3a3a;letter-spacing:0.483px;">Trap</div>
<div class="t" style="left:960.50px;top:74px;font-size:12.5px;line-height:20px;color:#3a3a3a;letter-spacing:0.779px;">Обнаружена вредоносная ТД ...</div>
<div class="t" style="left:1172.20px;top:74px;font-size:12.5px;line-height:20px;color:#3a3a3a;letter-spacing:0.776px;">1.3.6.1.4.1.35265.1.60.1.8.3....</div>
<div class="t" style="left:1373.96px;top:74px;font-size:12.5px;line-height:20px;color:#3a3a3a;letter-spacing:0.758px;">wep-531-4e07a0</div>
<div style="left:0px;top:96px;width:1573px;height:23px;background:#ffffff"></div>
<div style="left:0px;top:119px;width:1573px;height:1px;background:#808080"></div>
<div style="left:385px;top:96px;width:191px;height:23px;background:#ff0033"></div>
<div style="left:188px;top:96px;width:1px;height:24px;background:#808080"></div>
<div style="left:384px;top:96px;width:1px;height:24px;background:#808080"></div>
<div style="left:576px;top:96px;width:1px;height:24px;background:#808080"></div>
<div style="left:765px;top:96px;width:1px;height:24px;background:#808080"></div>
<div style="left:958px;top:96px;width:1px;height:24px;background:#808080"></div>
<div style="left:1170px;top:96px;width:1px;height:24px;background:#808080"></div>
<div style="left:1372px;top:96px;width:1px;height:24px;background:#808080"></div>
<div style="left:1573px;top:96px;width:1px;height:24px;background:#808080"></div>
<div class="t" style="left:1.60px;top:98px;font-size:12.5px;line-height:20px;color:#3a3a3a;letter-spacing:0.963px;">5347909</div>
<div class="t" style="left:190.80px;top:98px;font-size:12.5px;line-height:20px;color:#3a3a3a;letter-spacing:0.851px;">06.05.2019 12:14:49</div>
<div class="t" style="left:455.55px;top:98px;font-size:12.5px;line-height:20px;color:#3a3a3a;transform:scaleX(0.8834);transform-origin:0 0;">CRITICAL</div>
<div class="t" style="left:578.20px;top:98px;font-size:12.5px;line-height:20px;color:#3a3a3a;letter-spacing:0.600px;">Авария</div>
<div class="t" style="left:767.50px;top:98px;font-size:12.5px;line-height:20px;color:#3a3a3a;letter-spacing:0.483px;">Trap</div>
<div class="t" style="left:960.50px;top:98px;font-size:12.5px;line-height:20px;color:#3a3a3a;letter-spacing:0.779px;">Обнаружена вредоносная ТД ...</div>
<div class="t" style="left:1172.20px;top:98px;font-size:12.5px;line-height:20px;color:#3a3a3a;letter-spacing:0.776px;">1.3.6.1.4.1.35265.1.60.1.8.3....</div>
<div class="t" style="left:1373.96px;top:98px;font-size:12.5px;line-height:20px;color:#3a3a3a;letter-spacing:0.772px;">wep-509-8f85e0</div>
<div style="left:0px;top:120px;width:1573px;height:23px;background:#e0e0e0"></div>
<div style="left:0px;top:143px;width:1573px;height:1px;background:#808080"></div>
<div style="left:385px;top:120px;width:191px;height:23px;background:#ff0033"></div>
<div style="left:188px;top:120px;width:1px;height:24px;background:#808080"></div>
<div style="left:384px;top:120px;width:1px;height:24px;background:#808080"></div>
<div style="left:576px;top:120px;width:1px;height:24px;background:#808080"></div>
<div style="left:765px;top:120px;width:1px;height:24px;background:#808080"></div>
<div style="left:958px;top:120px;width:1px;height:24px;background:#808080"></div>
<div style="left:1170px;top:120px;width:1px;height:24px;background:#808080"></div>
<div style="left:1372px;top:120px;width:1px;height:24px;background:#808080"></div>
<div style="left:1573px;top:120px;width:1px;height:24px;background:#808080"></div>
<div class="t" style="left:1.60px;top:122px;font-size:12.5px;line-height:20px;color:#3a3a3a;letter-spacing:0.963px;">5347903</div>
<div class="t" style="left:190.80px;top:122px;font-size:12.5px;line-height:20px;color:#3a3a3a;letter-spacing:0.851px;">06.05.2019 12:14:43</div>
<div class="t" style="left:455.55px;top:122px;font-size:12.5px;line-height:20px;color:#3a3a3a;transform:scaleX(0.8834);transform-origin:0 0;">CRITICAL</div>
<div class="t" style="left:578.20px;top:122px;font-size:12.5px;line-height:20px;color:#3a3a3a;letter-spacing:0.600px;">Авария</div>
<div class="t" style="left:767.50px;top:122px;font-size:12.5px;line-height:20px;color:#3a3a3a;letter-spacing:0.483px;">Trap</div>
<div class="t" style="left:960.50px;top:122px;font-size:12.5px;line-height:20px;color:#3a3a3a;letter-spacing:0.779px;">Обнаружена вредоносная ТД ...</div>
<div class="t" style="left:1172.20px;top:122px;font-size:12.5px;line-height:20px;color:#3a3a3a;letter-spacing:0.776px;">1.3.6.1.4.1.35265.1.60.1.8.3....</div>
<div class="t" style="left:1373.96px;top:122px;font-size:12.5px;line-height:20px;color:#3a3a3a;letter-spacing:0.772px;">wep-509-8f85e0</div>
<div style="left:0px;top:144px;width:1573px;height:23px;background:#ffffff"></div>
<div style="left:0px;top:167px;width:1573px;height:1px;background:#808080"></div>
<div style="left:385px;top:144px;width:191px;height:23px;background:#ff0033"></div>
<div style="left:188px;top:144px;width:1px;height:24px;background:#808080"></div>
<div style="left:384px;top:144px;width:1px;height:24px;background:#808080"></div>
<div style="left:576px;top:144px;width:1px;height:24px;background:#808080"></div>
<div style="left:765px;top:144px;width:1px;height:24px;background:#808080"></div>
<div style="left:958px;top:144px;width:1px;height:24px;background:#808080"></div>
<div style="left:1170px;top:144px;width:1px;height:24px;background:#808080"></div>
<div style="left:1372px;top:144px;width:1px;height:24px;background:#808080"></div>
<div style="left:1573px;top:144px;width:1px;height:24px;background:#808080"></div>
<div class="t" style="left:1.60px;top:146px;font-size:12.5px;line-height:20px;color:#3a3a3a;letter-spacing:0.963px;">5347896</div>
<div class="t" style="left:190.80px;top:146px;font-size:12.5px;line-height:20px;color:#3a3a3a;letter-spacing:0.851px;">06.05.2019 12:14:38</div>
<div class="t" style="left:455.55px;top:146px;font-size:12.5px;line-height:20px;color:#3a3a3a;transform:scaleX(0.8834);transform-origin:0 0;">CRITICAL</div>
<div class="t" style="left:578.20px;top:146px;font-size:12.5px;line-height:20px;color:#3a3a3a;letter-spacing:0.600px;">Авария</div>
<div class="t" style="left:767.50px;top:146px;font-size:12.5px;line-height:20px;color:#3a3a3a;letter-spacing:0.483px;">Trap</div>
<div class="t" style="left:960.50px;top:146px;font-size:12.5px;line-height:20px;color:#3a3a3a;letter-spacing:0.779px;">Обнаружена вредоносная ТД ...</div>
<div class="t" style="left:1172.20px;top:146px;font-size:12.5px;line-height:20px;color:#3a3a3a;letter-spacing:0.776px;">1.3.6.1.4.1.35265.1.60.1.8.3....</div>
<div class="t" style="left:1373.96px;top:146px;font-size:12.5px;line-height:20px;color:#3a3a3a;letter-spacing:0.758px;">wep-526-4e08a0</div>
<div style="left:0px;top:168px;width:1573px;height:23px;background:#e0e0e0"></div>
<div style="left:0px;top:191px;width:1573px;height:1px;background:#808080"></div>
<div style="left:385px;top:168px;width:191px;height:23px;background:#ff0033"></div>
<div style="left:188px;top:168px;width:1px;height:24px;background:#808080"></div>
<div style="left:384px;top:168px;width:1px;height:24px;background:#808080"></div>
<div style="left:576px;top:168px;width:1px;height:24px;background:#808080"></div>
<div style="left:765px;top:168px;width:1px;height:24px;background:#808080"></div>
<div style="left:958px;top:168px;width:1px;height:24px;background:#808080"></div>
<div style="left:1170px;top:168px;width:1px;height:24px;background:#808080"></div>
<div style="left:1372px;top:168px;width:1px;height:24px;background:#808080"></div>
<div style="left:1573px;top:168px;width:1px;height:24px;background:#808080"></div>
<div class="t" style="left:1.60px;top:170px;font-size:12.5px;line-height:20px;color:#3a3a3a;letter-spacing:0.963px;">5347888</div>
<div class="t" style="left:190.80px;top:170px;font-size:12.5px;line-height:20px;color:#3a3a3a;letter-spacing:0.851px;">06.05.2019 12:14:31</div>
<div class="t" style="left:455.55px;top:170px;font-size:12.5px;line-height:20px;color:#3a3a3a;transform:scaleX(0.8834);transform-origin:0 0;">CRITICAL</div>
<div class="t" style="left:578.20px;top:170px;font-size:12.5px;line-height:20px;color:#3a3a3a;letter-spacing:0.600px;">Авария</div>
<div class="t" style="left:767.50px;top:170px;font-size:12.5px;line-height:20px;color:#3a3a3a;letter-spacing:0.483px;">Trap</div>
<div class="t" style="left:960.50px;top:170px;font-size:12.5px;line-height:20px;color:#3a3a3a;letter-spacing:0.779px;">Обнаружена вредоносная ТД ...</div>
<div class="t" style="left:1172.20px;top:170px;font-size:12.5px;line-height:20px;color:#3a3a3a;letter-spacing:0.776px;">1.3.6.1.4.1.35265.1.60.1.8.3....</div>
<div class="t" style="left:1373.96px;top:170px;font-size:12.5px;line-height:20px;color:#3a3a3a;letter-spacing:0.774px;">wep-532-4e0000</div>
<div style="left:0px;top:192px;width:1573px;height:23px;background:#ffffff"></div>
<div style="left:0px;top:215px;width:1573px;height:1px;background:#808080"></div>
<div style="left:385px;top:192px;width:191px;height:23px;background:#ff9933"></div>
<div style="left:188px;top:192px;width:1px;height:24px;background:#808080"></div>
<div style="left:384px;top:192px;width:1px;height:24px;background:#808080"></div>
<div style="left:576px;top:192px;width:1px;height:24px;background:#808080"></div>
<div style="left:765px;top:192px;width:1px;height:24px;background:#808080"></div>
<div style="left:958px;top:192px;width:1px;height:24px;background:#808080"></div>
<div style="left:1170px;top:192px;width:1px;height:24px;background:#808080"></div>
<div style="left:1372px;top:192px;width:1px;height:24px;background:#808080"></div>
<div style="left:1573px;top:192px;width:1px;height:24px;background:#808080"></div>
<div class="t" style="left:1.60px;top:194px;font-size:12.5px;line-height:20px;color:#3a3a3a;letter-spacing:0.963px;">5347885</div>
<div class="t" style="left:190.80px;top:194px;font-size:12.5px;line-height:20px;color:#3a3a3a;letter-spacing:0.851px;">06.05.2019 12:14:29</div>
<div class="t" style="left:461.55px;top:194px;font-size:12.5px;line-height:20px;color:#3a3a3a;transform:scaleX(0.8754);transform-origin:0 0;">MAJOR</div>
<div class="t" style="left:578.20px;top:194px;font-size:12.5px;line-height:20px;color:#3a3a3a;letter-spacing:0.600px;">Авария</div>
<div class="t" style="left:767.50px;top:194px;font-size:12.5px;line-height:20px;color:#3a3a3a;letter-spacing:1.203px;">Доступ</div>
<div class="t" style="left:960.50px;top:194px;font-size:12.5px;line-height:20px;color:#3a3a3a;letter-spacing:1.028px;">Потеря связи с объектом</div>
<div class="t" style="left:1172.20px;top:194px;font-size:12.5px;line-height:20px;color:#3a3a3a;letter-spacing:0.791px;">1.3.6.1.4.1.35265.2.1.1.1.1</div>
<div class="t" style="left:1373.90px;top:194px;font-size:12.5px;line-height:20px;color:#3a3a3a;letter-spacing:1.133px;">testap3</div>
<div style="left:0px;top:216px;width:1573px;height:23px;background:#e0e0e0"></div>
<div style="left:0px;top:239px;width:1573px;height:1px;background:#808080"></div>
<div style="left:385px;top:216px;width:191px;height:23px;background:#ff0033"></div>
<div style="left:188px;top:216px;width:1px;height:24px;background:#808080"></div>
<div style="left:384px;top:216px;width:1px;height:24px;background:#808080"></div>
<div style="left:576px;top:216px;width:1px;height:24px;background:#808080"></div>
<div style="left:765px;top:216px;width:1px;height:24px;background:#808080"></div>
<div style="left:958px;top:216px;width:1px;height:24px;background:#808080"></div>
<div style="left:1170px;top:216px;width:1px;height:24px;background:#808080"></div>
<div style="left:1372px;top:216px;width:1px;height:24px;background:#808080"></div>
<div style="left:1573px;top:216px;width:1px;height:24px;background:#808080"></div>
<div class="t" style="left:1.60px;top:218px;font-size:12.5px;line-height:20px;color:#3a3a3a;letter-spacing:0.963px;">5347884</div>
<div class="t" style="left:190.80px;top:218px;font-size:12.5px;line-height:20px;color:#3a3a3a;letter-spacing:0.851px;">06.05.2019 12:14:29</div>
<div class="t" style="left:455.55px;top:218px;font-size:12.5px;line-height:20px;color:#3a3a3a;transform:scaleX(0.8834);transform-origin:0 0;">CRITICAL</div>
<div class="t" style="left:578.20px;top:218px;font-size:12.5px;line-height:20px;color:#3a3a3a;letter-spacing:0.600px;">Авария</div>
<div class="t" style="left:767.50px;top:218px;font-size:12.5px;line-height:20px;color:#3a3a3a;letter-spacing:0.483px;">Trap</div>
<div class="t" style="left:960.50px;top:218px;font-size:12.5px;line-height:20px;color:#3a3a3a;letter-spacing:0.779px;">Обнаружена вредоносная ТД ...</div>
<div class="t" style="left:1172.20px;top:218px;font-size:12.5px;line-height:20px;color:#3a3a3a;letter-spacing:0.776px;">1.3.6.1.4.1.35265.1.60.1.8.3....</div>
<div class="t" style="left:1373.96px;top:218px;font-size:12.5px;line-height:20px;color:#3a3a3a;letter-spacing:0.772px;">wep-509-8f85e0</div>
<div style="left:0px;top:240px;width:1573px;height:23px;background:#ffffff"></div>
<div style="left:0px;top:263px;width:1573px;height:1px;background:#808080"></div>
<div style="left:385px;top:240px;width:191px;height:23px;background:#ff9933"></div>
<div style="left:188px;top:240px;width:1px;height:24px;background:#808080"></div>
<div style="left:384px;top:240px;width:1px;height:24px;background:#808080"></div>
<div style="left:576px;top:240px;width:1px;height:24px;background:#808080"></div>
<div style="left:765px;top:240px;width:1px;height:24px;background:#808080"></div>
<div style="left:958px;top:240px;width:1px;height:24px;background:#808080"></div>
<div style="left:1170px;top:240px;width:1px;height:24px;background:#808080"></div>
<div style="left:1372px;top:240px;width:1px;height:24px;background:#808080"></div>
<div style="left:1573px;top:240px;width:1px;height:24px;background:#808080"></div>
<div class="t" style="left:1.60px;top:242px;font-size:12.5px;line-height:20px;color:#3a3a3a;letter-spacing:0.963px;">5347883</div>
<div class="t" style="left:190.80px;top:242px;font-size:12.5px;line-height:20px;color:#3a3a3a;letter-spacing:0.851px;">06.05.2019 12:14:29</div>
<div class="t" style="left:461.55px;top:242px;font-size:12.5px;line-height:20px;color:#3a3a3a;transform:scaleX(0.8754);transform-origin:0 0;">MAJOR</div>
<div class="t" style="left:578.20px;top:242px;font-size:12.5px;line-height:20px;color:#3a3a3a;letter-spacing:0.600px;">Авария</div>
<div class="t" style="left:767.50px;top:242px;font-size:12.5px;line-height:20px;color:#3a3a3a;letter-spacing:1.203px;">Доступ</div>
<div class="t" style="left:960.50px;top:242px;font-size:12.5px;line-height:20px;color:#3a3a3a;letter-spacing:1.028px;">Потеря связи с объектом</div>
<div class="t" style="left:1172.20px;top:242px;font-size:12.5px;line-height:20px;color:#3a3a3a;letter-spacing:0.791px;">1.3.6.1.4.1.35265.2.1.1.1.1</div>
<div class="t" style="left:1373.90px;top:242px;font-size:12.5px;line-height:20px;color:#3a3a3a;letter-spacing:0.919px;">testap2</div>
<div style="left:0px;top:264px;width:1573px;height:23px;background:#e0e0e0"></div>
<div style="left:0px;top:287px;width:1573px;height:1px;background:#808080"></div>
<div style="left:385px;top:264px;width:191px;height:23px;background:#ff0033"></div>
<div style="left:188px;top:264px;width:1px;height:24px;background:#808080"></div>
<div style="left:384px;top:264px;width:1px;height:24px;background:#808080"></div>
<div style="left:576px;top:264px;width:1px;height:24px;background:#808080"></div>
<div style="left:765px;top:264px;width:1px;height:24px;background:#808080"></div>
<div style="left:958px;top:264px;width:1px;height:24px;background:#808080"></div>
<div style="left:1170px;top:264px;width:1px;height:24px;background:#808080"></div>
<div style="left:1372px;top:264px;width:1px;height:24px;background:#808080"></div>
<div style="left:1573px;top:264px;width:1px;height:24px;background:#808080"></div>
<div class="t" style="left:1.60px;top:266px;font-size:12.5px;line-height:20px;color:#3a3a3a;letter-spacing:0.963px;">5347882</div>
<div class="t" style="left:190.80px;top:266px;font-size:12.5px;line-height:20px;color:#3a3a3a;letter-spacing:0.851px;">06.05.2019 12:14:28</div>
<div class="t" style="left:455.55px;top:266px;font-size:12.5px;line-height:20px;color:#3a3a3a;transform:scaleX(0.8834);transform-origin:0 0;">CRITICAL</div>
<div class="t" style="left:578.20px;top:266px;font-size:12.5px;line-height:20px;color:#3a3a3a;letter-spacing:0.600px;">Авария</div>
<div class="t" style="left:767.50px;top:266px;font-size:12.5px;line-height:20px;color:#3a3a3a;letter-spacing:0.483px;">Trap</div>
<div class="t" style="left:960.50px;top:266px;font-size:12.5px;line-height:20px;color:#3a3a3a;letter-spacing:0.779px;">Обнаружена вредоносная ТД ...</div>
<div class="t" style="left:1172.20px;top:266px;font-size:12.5px;line-height:20px;color:#3a3a3a;letter-spacing:0.776px;">1.3.6.1.4.1.35265.1.60.1.8.3....</div>
<div class="t" style="left:1373.96px;top:266px;font-size:12.5px;line-height:20px;color:#3a3a3a;letter-spacing:0.772px;">wep-509-8f85e0</div>
<div style="left:0px;top:288px;width:1573px;height:23px;background:#ffffff"></div>
<div style="left:0px;top:311px;width:1573px;height:1px;background:#808080"></div>
<div style="left:385px;top:288px;width:191px;height:23px;background:#ff0033"></div>
<div style="left:188px;top:288px;width:1px;height:24px;background:#808080"></div>
<div style="left:384px;top:288px;width:1px;height:24px;background:#808080"></div>
<div style="left:576px;top:288px;width:1px;height:24px;background:#808080"></div>
<div style="left:765px;top:288px;width:1px;height:24px;background:#808080"></div>
<div style="left:958px;top:288px;width:1px;height:24px;background:#808080"></div>
<div style="left:1170px;top:288px;width:1px;height:24px;background:#808080"></div>
<div style="left:1372px;top:288px;width:1px;height:24px;background:#808080"></div>
<div style="left:1573px;top:288px;width:1px;height:24px;background:#808080"></div>
<div class="t" style="left:1.60px;top:290px;font-size:12.5px;line-height:20px;color:#3a3a3a;letter-spacing:0.963px;">5347874</div>
<div class="t" style="left:190.80px;top:290px;font-size:12.5px;line-height:20px;color:#3a3a3a;letter-spacing:0.851px;">06.05.2019 12:14:23</div>
<div class="t" style="left:455.55px;top:290px;font-size:12.5px;line-height:20px;color:#3a3a3a;transform:scaleX(0.8834);transform-origin:0 0;">CRITICAL</div>
<div class="t" style="left:578.20px;top:290px;font-size:12.5px;line-height:20px;color:#3a3a3a;letter-spacing:0.600px;">Авария</div>
<div class="t" style="left:767.50px;top:290px;font-size:12.5px;line-height:20px;color:#3a3a3a;letter-spacing:0.483px;">Trap</div>
<div class="t" style="left:960.50px;top:290px;font-size:12.5px;line-height:20px;color:#3a3a3a;letter-spacing:0.779px;">Обнаружена вредоносная ТД ...</div>
<div class="t" style="left:1172.20px;top:290px;font-size:12.5px;line-height:20px;color:#3a3a3a;letter-spacing:0.776px;">1.3.6.1.4.1.35265.1.60.1.8.3....</div>
<div class="t" style="left:1373.96px;top:290px;font-size:12.5px;line-height:20px;color:#3a3a3a;letter-spacing:0.774px;">wep-532-4e0000</div>
<div style="left:0px;top:312px;width:1573px;height:23px;background:#e0e0e0"></div>
<div style="left:0px;top:335px;width:1573px;height:1px;background:#808080"></div>
<div style="left:385px;top:312px;width:191px;height:23px;background:#ff0033"></div>
<div style="left:188px;top:312px;width:1px;height:24px;background:#808080"></div>
<div style="left:384px;top:312px;width:1px;height:24px;background:#808080"></div>
<div style="left:576px;top:312px;width:1px;height:24px;background:#808080"></div>
<div style="left:765px;top:312px;width:1px;height:24px;background:#808080"></div>
<div style="left:958px;top:312px;width:1px;height:24px;background:#808080"></div>
<div style="left:1170px;top:312px;width:1px;height:24px;background:#808080"></div>
<div style="left:1372px;top:312px;width:1px;height:24px;background:#808080"></div>
<div style="left:1573px;top:312px;width:1px;height:24px;background:#808080"></div>
<div class="t" style="left:1.60px;top:314px;font-size:12.5px;line-height:20px;color:#3a3a3a;letter-spacing:0.963px;">5347871</div>
<div class="t" style="left:190.80px;top:314px;font-size:12.5px;line-height:20px;color:#3a3a3a;letter-spacing:0.851px;">06.05.2019 12:14:19</div>
<div class="t" style="left:455.55px;top:314px;font-size:12.5px;line-height:20px;color:#3a3a3a;transform:scaleX(0.8834);transform-origin:0 0;">CRITICAL</div>
<div class="t" style="left:578.20px;top:314px;font-size:12.5px;line-height:20px;color:#3a3a3a;letter-spacing:0.600px;">Авария</div>
<div class="t" style="left:767.50px;top:314px;font-size:12.5px;line-height:20px;color:#3a3a3a;letter-spacing:0.483px;">Trap</div>
<div class="t" style="left:960.50px;top:314px;font-size:12.5px;line-height:20px;color:#3a3a3a;letter-spacing:0.779px;">Обнаружена вредоносная ТД ...</div>
<div class="t" style="left:1172.20px;top:314px;font-size:12.5px;line-height:20px;color:#3a3a3a;letter-spacing:0.776px;">1.3.6.1.4.1.35265.1.60.1.8.3....</div>
<div class="t" style="left:1373.96px;top:314px;font-size:12.5px;line-height:20px;color:#3a3a3a;letter-spacing:0.758px;">wep-522-4e60a0</div>
<div style="left:0px;top:336px;width:1573px;height:23px;background:#ffffff"></div>
<div style="left:0px;top:359px;width:1573px;height:1px;background:#808080"></div>
<div style="left:385px;top:336px;width:191px;height:23px;background:#ff0033"></div>
<div style="left:188px;top:336px;width:1px;height:24px;background:#808080"></div>
<div style="left:384px;top:336px;width:1px;height:24px;background:#808080"></div>
<div style="left:576px;top:336px;width:1px;height:24px;background:#808080"></div>
<div style="left:765px;top:336px;width:1px;height:24px;background:#808080"></div>
<div style="left:958px;top:336px;width:1px;height:24px;background:#808080"></div>
<div style="left:1170px;top:336px;width:1px;height:24px;background:#808080"></div>
<div style="left:1372px;top:336px;width:1px;height:24px;background:#808080"></div>
<div style="left:1573px;top:336px;width:1px;height:24px;background:#808080"></div>
<div class="t" style="left:1.60px;top:338px;font-size:12.5px;line-height:20px;color:#3a3a3a;letter-spacing:0.963px;">5347870</div>
<div class="t" style="left:190.80px;top:338px;font-size:12.5px;line-height:20px;color:#3a3a3a;letter-spacing:0.851px;">06.05.2019 12:14:18</div>
<div class="t" style="left:455.55px;top:338px;font-size:12.5px;line-height:20px;color:#3a3a3a;transform:scaleX(0.8834);transform-origin:0 0;">CRITICAL</div>
<div class="t" style="left:578.20px;top:338px;font-size:12.5px;line-height:20px;color:#3a3a3a;letter-spacing:0.600px;">Авария</div>
<div class="t" style="left:767.50px;top:338px;font-size:12.5px;line-height:20px;color:#3a3a3a;letter-spacing:0.483px;">Trap</div>
<div class="t" style="left:960.50px;top:338px;font-size:12.5px;line-height:20px;color:#3a3a3a;letter-spacing:0.779px;">Обнаружена вредоносная ТД ...</div>
<div class="t" style="left:1172.20px;top:338px;font-size:12.5px;line-height:20px;color:#3a3a3a;letter-spacing:0.776px;">1.3.6.1.4.1.35265.1.60.1.8.3....</div>
<div class="t" style="left:1373.96px;top:338px;font-size:12.5px;line-height:20px;color:#3a3a3a;letter-spacing:0.774px;">wep-515-4e0640</div>
<div style="left:0px;top:360px;width:1573px;height:23px;background:#e0e0e0"></div>
<div style="left:0px;top:383px;width:1573px;height:1px;background:#808080"></div>
<div style="left:385px;top:360px;width:191px;height:23px;background:#ff0033"></div>
<div style="left:188px;top:360px;width:1px;height:24px;background:#808080"></div>
<div style="left:384px;top:360px;width:1px;height:24px;background:#808080"></div>
<div style="left:576px;top:360px;width:1px;height:24px;background:#808080"></div>
<div style="left:765px;top:360px;width:1px;height:24px;background:#808080"></div>
<div style="left:958px;top:360px;width:1px;height:24px;background:#808080"></div>
<div style="left:1170px;top:360px;width:1px;height:24px;background:#808080"></div>
<div style="left:1372px;top:360px;width:1px;height:24px;background:#808080"></div>
<div style="left:1573px;top:360px;width:1px;height:24px;background:#808080"></div>
<div class="t" style="left:1.60px;top:362px;font-size:12.5px;line-height:20px;color:#3a3a3a;letter-spacing:0.963px;">5347867</div>
<div class="t" style="left:190.80px;top:362px;font-size:12.5px;line-height:20px;color:#3a3a3a;letter-spacing:0.851px;">06.05.2019 12:14:17</div>
<div class="t" style="left:455.55px;top:362px;font-size:12.5px;line-height:20px;color:#3a3a3a;transform:scaleX(0.8834);transform-origin:0 0;">CRITICAL</div>
<div class="t" style="left:578.20px;top:362px;font-size:12.5px;line-height:20px;color:#3a3a3a;letter-spacing:0.600px;">Авария</div>
<div class="t" style="left:767.50px;top:362px;font-size:12.5px;line-height:20px;color:#3a3a3a;letter-spacing:0.483px;">Trap</div>
<div class="t" style="left:960.50px;top:362px;font-size:12.5px;line-height:20px;color:#3a3a3a;letter-spacing:0.779px;">Обнаружена вредоносная ТД ...</div>
<div class="t" style="left:1172.20px;top:362px;font-size:12.5px;line-height:20px;color:#3a3a3a;letter-spacing:0.776px;">1.3.6.1.4.1.35265.1.60.1.8.3....</div>
<div class="t" style="left:1373.96px;top:362px;font-size:12.5px;line-height:20px;color:#3a3a3a;letter-spacing:0.758px;">wep-531-4e07a0</div>
<div style="left:0px;top:384px;width:1573px;height:23px;background:#ffffff"></div>
<div style="left:0px;top:407px;width:1573px;height:1px;background:#808080"></div>
<div style="left:385px;top:384px;width:191px;height:23px;background:#ff0033"></div>
<div style="left:188px;top:384px;width:1px;height:24px;background:#808080"></div>
<div style="left:384px;top:384px;width:1px;height:24px;background:#808080"></div>
<div style="left:576px;top:384px;width:1px;height:24px;background:#808080"></div>
<div style="left:765px;top:384px;width:1px;height:24px;background:#808080"></div>
<div style="left:958px;top:384px;width:1px;height:24px;background:#808080"></div>
<div style="left:1170px;top:384px;width:1px;height:24px;background:#808080"></div>
<div style="left:1372px;top:384px;width:1px;height:24px;background:#808080"></div>
<div style="left:1573px;top:384px;width:1px;height:24px;background:#808080"></div>
<div class="t" style="left:1.60px;top:386px;font-size:12.5px;line-height:20px;color:#3a3a3a;letter-spacing:0.963px;">5347866</div>
<div class="t" style="left:190.80px;top:386px;font-size:12.5px;line-height:20px;color:#3a3a3a;letter-spacing:0.851px;">06.05.2019 12:14:16</div>
<div class="t" style="left:455.55px;top:386px;font-size:12.5px;line-height:20px;color:#3a3a3a;transform:scaleX(0.8834);transform-origin:0 0;">CRITICAL</div>
<div class="t" style="left:578.20px;top:386px;font-size:12.5px;line-height:20px;color:#3a3a3a;letter-spacing:0.600px;">Авария</div>
<div class="t" style="left:767.50px;top:386px;font-size:12.5px;line-height:20px;color:#3a3a3a;letter-spacing:0.483px;">Trap</div>
<div class="t" style="left:960.50px;top:386px;font-size:12.5px;line-height:20px;color:#3a3a3a;letter-spacing:0.779px;">Обнаружена вредоносная ТД ...</div>
<div class="t" style="left:1172.20px;top:386px;font-size:12.5px;line-height:20px;color:#3a3a3a;letter-spacing:0.776px;">1.3.6.1.4.1.35265.1.60.1.8.3....</div>
<div class="t" style="left:1373.96px;top:386px;font-size:12.5px;line-height:20px;color:#3a3a3a;letter-spacing:0.758px;">wep-522-4e60a0</div>
<div style="left:0px;top:408px;width:1573px;height:23px;background:#e0e0e0"></div>
<div style="left:0px;top:431px;width:1573px;height:1px;background:#808080"></div>
<div style="left:385px;top:408px;width:191px;height:23px;background:#ff0033"></div>
<div style="left:188px;top:408px;width:1px;height:24px;background:#808080"></div>
<div style="left:384px;top:408px;width:1px;height:24px;background:#808080"></div>
<div style="left:576px;top:408px;width:1px;height:24px;background:#808080"></div>
<div style="left:765px;top:408px;width:1px;height:24px;background:#808080"></div>
<div style="left:958px;top:408px;width:1px;height:24px;background:#808080"></div>
<div style="left:1170px;top:408px;width:1px;height:24px;background:#808080"></div>
<div style="left:1372px;top:408px;width:1px;height:24px;background:#808080"></div>
<div style="left:1573px;top:408px;width:1px;height:24px;background:#808080"></div>
<div class="t" style="left:1.60px;top:410px;font-size:12.5px;line-height:20px;color:#3a3a3a;letter-spacing:0.963px;">5347864</div>
<div class="t" style="left:190.80px;top:410px;font-size:12.5px;line-height:20px;color:#3a3a3a;letter-spacing:0.851px;">06.05.2019 12:14:14</div>
<div class="t" style="left:455.55px;top:410px;font-size:12.5px;line-height:20px;color:#3a3a3a;transform:scaleX(0.8834);transform-origin:0 0;">CRITICAL</div>
<div class="t" style="left:578.20px;top:410px;font-size:12.5px;line-height:20px;color:#3a3a3a;letter-spacing:0.600px;">Авария</div>
<div class="t" style="left:767.50px;top:410px;font-size:12.5px;line-height:20px;color:#3a3a3a;letter-spacing:0.483px;">Trap</div>
<div class="t" style="left:960.50px;top:410px;font-size:12.5px;line-height:20px;color:#3a3a3a;letter-spacing:0.779px;">Обнаружена вредоносная ТД ...</div>
<div class="t" style="left:1172.20px;top:410px;font-size:12.5px;line-height:20px;color:#3a3a3a;letter-spacing:0.776px;">1.3.6.1.4.1.35265.1.60.1.8.3....</div>
<div class="t" style="left:1373.96px;top:410px;font-size:12.5px;line-height:20px;color:#3a3a3a;letter-spacing:0.786px;">wep-519-4e0bc0</div>
<div style="left:0px;top:432px;width:1573px;height:23px;background:#ffffff"></div>
<div style="left:0px;top:455px;width:1573px;height:1px;background:#808080"></div>
<div style="left:385px;top:432px;width:191px;height:23px;background:#ff0033"></div>
<div style="left:188px;top:432px;width:1px;height:24px;background:#808080"></div>
<div style="left:384px;top:432px;width:1px;height:24px;background:#808080"></div>
<div style="left:576px;top:432px;width:1px;height:24px;background:#808080"></div>
<div style="left:765px;top:432px;width:1px;height:24px;background:#808080"></div>
<div style="left:958px;top:432px;width:1px;height:24px;background:#808080"></div>
<div style="left:1170px;top:432px;width:1px;height:24px;background:#808080"></div>
<div style="left:1372px;top:432px;width:1px;height:24px;background:#808080"></div>
<div style="left:1573px;top:432px;width:1px;height:24px;background:#808080"></div>
<div class="t" style="left:1.60px;top:434px;font-size:12.5px;line-height:20px;color:#3a3a3a;letter-spacing:0.963px;">5347863</div>
<div class="t" style="left:190.80px;top:434px;font-size:12.5px;line-height:20px;color:#3a3a3a;letter-spacing:0.851px;">06.05.2019 12:14:13</div>
<div class="t" style="left:455.55px;top:434px;font-size:12.5px;line-height:20px;color:#3a3a3a;transform:scaleX(0.8834);transform-origin:0 0;">CRITICAL</div>
<div class="t" style="left:578.20px;top:434px;font-size:12.5px;line-height:20px;color:#3a3a3a;letter-spacing:0.600px;">Авария</div>
<div class="t" style="left:767.50px;top:434px;font-size:12.5px;line-height:20px;color:#3a3a3a;letter-spacing:0.483px;">Trap</div>
<div class="t" style="left:960.50px;top:434px;font-size:12.5px;line-height:20px;color:#3a3a3a;letter-spacing:0.779px;">Обнаружена вредоносная ТД ...</div>
<div class="t" style="left:1172.20px;top:434px;font-size:12.5px;line-height:20px;color:#3a3a3a;letter-spacing:0.776px;">1.3.6.1.4.1.35265.1.60.1.8.3....</div>
<div class="t" style="left:1373.96px;top:434px;font-size:12.5px;line-height:20px;color:#3a3a3a;letter-spacing:0.749px;">wep-501-4e07c0</div>
<div style="left:0px;top:456px;width:1573px;height:23px;background:#e0e0e0"></div>
<div style="left:0px;top:479px;width:1573px;height:1px;background:#808080"></div>
<div style="left:385px;top:456px;width:191px;height:23px;background:#ff0033"></div>
<div style="left:188px;top:456px;width:1px;height:24px;background:#808080"></div>
<div style="left:384px;top:456px;width:1px;height:24px;background:#808080"></div>
<div style="left:576px;top:456px;width:1px;height:24px;background:#808080"></div>
<div style="left:765px;top:456px;width:1px;height:24px;background:#808080"></div>
<div style="left:958px;top:456px;width:1px;height:24px;background:#808080"></div>
<div style="left:1170px;top:456px;width:1px;height:24px;background:#808080"></div>
<div style="left:1372px;top:456px;width:1px;height:24px;background:#808080"></div>
<div style="left:1573px;top:456px;width:1px;height:24px;background:#808080"></div>
<div class="t" style="left:1.60px;top:458px;font-size:12.5px;line-height:20px;color:#3a3a3a;letter-spacing:0.963px;">5347861</div>
<div class="t" style="left:190.80px;top:458px;font-size:12.5px;line-height:20px;color:#3a3a3a;letter-spacing:0.851px;">06.05.2019 12:14:09</div>
<div class="t" style="left:455.55px;top:458px;font-size:12.5px;line-height:20px;color:#3a3a3a;transform:scaleX(0.8834);transform-origin:0 0;">CRITICAL</div>
<div class="t" style="left:578.20px;top:458px;font-size:12.5px;line-height:20px;color:#3a3a3a;letter-spacing:0.600px;">Авария</div>
<div class="t" style="left:767.50px;top:458px;font-size:12.5px;line-height:20px;color:#3a3a3a;letter-spacing:0.483px;">Trap</div>
<div class="t" style="left:960.50px;top:458px;font-size:12.5px;line-height:20px;color:#3a3a3a;letter-spacing:0.779px;">Обнаружена вредоносная ТД ...</div>
<div class="t" style="left:1172.20px;top:458px;font-size:12.5px;line-height:20px;color:#3a3a3a;letter-spacing:0.776px;">1.3.6.1.4.1.35265.1.60.1.8.3....</div>
<div class="t" style="left:1373.96px;top:458px;font-size:12.5px;line-height:20px;color:#3a3a3a;letter-spacing:0.758px;">wep-522-4e60a0</div>
<div style="left:0px;top:480px;width:1573px;height:23px;background:#ffffff"></div>
<div style="left:0px;top:503px;width:1573px;height:1px;background:#808080"></div>
<div style="left:385px;top:480px;width:191px;height:23px;background:#ff0033"></div>
<div style="left:188px;top:480px;width:1px;height:24px;background:#808080"></div>
<div style="left:384px;top:480px;width:1px;height:24px;background:#808080"></div>
<div style="left:576px;top:480px;width:1px;height:24px;background:#808080"></div>
<div style="left:765px;top:480px;width:1px;height:24px;background:#808080"></div>
<div style="left:958px;top:480px;width:1px;height:24px;background:#808080"></div>
<div style="left:1170px;top:480px;width:1px;height:24px;background:#808080"></div>
<div style="left:1372px;top:480px;width:1px;height:24px;background:#808080"></div>
<div style="left:1573px;top:480px;width:1px;height:24px;background:#808080"></div>
<div class="t" style="left:1.60px;top:482px;font-size:12.5px;line-height:20px;color:#3a3a3a;letter-spacing:0.963px;">5347858</div>
<div class="t" style="left:190.80px;top:482px;font-size:12.5px;line-height:20px;color:#3a3a3a;letter-spacing:0.851px;">06.05.2019 12:14:06</div>
<div class="t" style="left:455.55px;top:482px;font-size:12.5px;line-height:20px;color:#3a3a3a;transform:scaleX(0.8834);transform-origin:0 0;">CRITICAL</div>
<div class="t" style="left:578.20px;top:482px;font-size:12.5px;line-height:20px;color:#3a3a3a;letter-spacing:0.600px;">Авария</div>
<div class="t" style="left:767.50px;top:482px;font-size:12.5px;line-height:20px;color:#3a3a3a;letter-spacing:0.483px;">Trap</div>
<div class="t" style="left:960.50px;top:482px;font-size:12.5px;line-height:20px;color:#3a3a3a;letter-spacing:0.779px;">Обнаружена вредоносная ТД ...</div>
<div class="t" style="left:1172.20px;top:482px;font-size:12.5px;line-height:20px;color:#3a3a3a;letter-spacing:0.776px;">1.3.6.1.4.1.35265.1.60.1.8.3....</div>
<div class="t" style="left:1373.96px;top:482px;font-size:12.5px;line-height:20px;color:#3a3a3a;letter-spacing:0.772px;">wep-509-8f85e0</div>
<div style="left:0px;top:504px;width:1573px;height:23px;background:#e0e0e0"></div>
<div style="left:0px;top:527px;width:1573px;height:1px;background:#808080"></div>
<div style="left:385px;top:504px;width:191px;height:23px;background:#ff0033"></div>
<div style="left:188px;top:504px;width:1px;height:24px;background:#808080"></div>
<div style="left:384px;top:504px;width:1px;height:24px;background:#808080"></div>
<div style="left:576px;top:504px;width:1px;height:24px;background:#808080"></div>
<div style="left:765px;top:504px;width:1px;height:24px;background:#808080"></div>
<div style="left:958px;top:504px;width:1px;height:24px;background:#808080"></div>
<div style="left:1170px;top:504px;width:1px;height:24px;background:#808080"></div>
<div style="left:1372px;top:504px;width:1px;height:24px;background:#808080"></div>
<div style="left:1573px;top:504px;width:1px;height:24px;background:#808080"></div>
<div class="t" style="left:1.60px;top:506px;font-size:12.5px;line-height:20px;color:#3a3a3a;letter-spacing:0.963px;">5347853</div>
<div class="t" style="left:190.80px;top:506px;font-size:12.5px;line-height:20px;color:#3a3a3a;letter-spacing:0.851px;">06.05.2019 12:14:01</div>
<div class="t" style="left:455.55px;top:506px;font-size:12.5px;line-height:20px;color:#3a3a3a;transform:scaleX(0.8834);transform-origin:0 0;">CRITICAL</div>
<div class="t" style="left:578.20px;top:506px;font-size:12.5px;line-height:20px;color:#3a3a3a;letter-spacing:0.600px;">Авария</div>
<div class="t" style="left:767.50px;top:506px;font-size:12.5px;line-height:20px;color:#3a3a3a;letter-spacing:0.483px;">Trap</div>
<div class="t" style="left:960.50px;top:506px;font-size:12.5px;line-height:20px;color:#3a3a3a;letter-spacing:0.779px;">Обнаружена вредоносная ТД ...</div>
<div class="t" style="left:1172.20px;top:506px;font-size:12.5px;line-height:20px;color:#3a3a3a;letter-spacing:0.776px;">1.3.6.1.4.1.35265.1.60.1.8.3....</div>
<div class="t" style="left:1373.96px;top:506px;font-size:12.5px;line-height:20px;color:#3a3a3a;letter-spacing:0.774px;">wep-532-4e0000</div>
<div style="left:0px;top:528px;width:1573px;height:23px;background:#ffffff"></div>
<div style="left:0px;top:551px;width:1573px;height:1px;background:#808080"></div>
<div style="left:385px;top:528px;width:191px;height:23px;background:#ff0033"></div>
<div style="left:188px;top:528px;width:1px;height:24px;background:#808080"></div>
<div style="left:384px;top:528px;width:1px;height:24px;background:#808080"></div>
<div style="left:576px;top:528px;width:1px;height:24px;background:#808080"></div>
<div style="left:765px;top:528px;width:1px;height:24px;background:#808080"></div>
<div style="left:958px;top:528px;width:1px;height:24px;background:#808080"></div>
<div style="left:1170px;top:528px;width:1px;height:24px;background:#808080"></div>
<div style="left:1372px;top:528px;width:1px;height:24px;background:#808080"></div>
<div style="left:1573px;top:528px;width:1px;height:24px;background:#808080"></div>
<div class="t" style="left:1.60px;top:530px;font-size:12.5px;line-height:20px;color:#3a3a3a;letter-spacing:0.963px;">5347850</div>
<div class="t" style="left:190.80px;top:530px;font-size:12.5px;line-height:20px;color:#3a3a3a;letter-spacing:0.851px;">06.05.2019 12:13:58</div>
<div class="t" style="left:455.55px;top:530px;font-size:12.5px;line-height:20px;color:#3a3a3a;transform:scaleX(0.8834);transform-origin:0 0;">CRITICAL</div>
<div class="t" style="left:578.20px;top:530px;font-size:12.5px;line-height:20px;color:#3a3a3a;letter-spacing:0.600px;">Авария</div>
<div class="t" style="left:767.50px;top:530px;font-size:12.5px;line-height:20px;color:#3a3a3a;letter-spacing:0.483px;">Trap</div>
<div class="t" style="left:960.50px;top:530px;font-size:12.5px;line-height:20px;color:#3a3a3a;letter-spacing:0.779px;">Обнаружена вредоносная ТД ...</div>
<div class="t" style="left:1172.20px;top:530px;font-size:12.5px;line-height:20px;color:#3a3a3a;letter-spacing:0.776px;">1.3.6.1.4.1.35265.1.60.1.8.3....</div>
<div class="t" style="left:1373.96px;top:530px;font-size:12.5px;line-height:20px;color:#3a3a3a;letter-spacing:0.774px;">wep-515-4e0640</div>
<div style="left:0px;top:552px;width:1573px;height:23px;background:#e0e0e0"></div>
<div style="left:0px;top:575px;width:1573px;height:1px;background:#808080"></div>
<div style="left:385px;top:552px;width:191px;height:23px;background:#ff0033"></div>
<div style="left:188px;top:552px;width:1px;height:24px;background:#808080"></div>
<div style="left:384px;top:552px;width:1px;height:24px;background:#808080"></div>
<div style="left:576px;top:552px;width:1px;height:24px;background:#808080"></div>
<div style="left:765px;top:552px;width:1px;height:24px;background:#808080"></div>
<div style="left:958px;top:552px;width:1px;height:24px;background:#808080"></div>
<div style="left:1170px;top:552px;width:1px;height:24px;background:#808080"></div>
<div style="left:1372px;top:552px;width:1px;height:24px;background:#808080"></div>
<div style="left:1573px;top:552px;width:1px;height:24px;background:#808080"></div>
<div class="t" style="left:1.60px;top:554px;font-size:12.5px;line-height:20px;color:#3a3a3a;letter-spacing:0.963px;">5347825</div>
<div class="t" style="left:190.80px;top:554px;font-size:12.5px;line-height:20px;color:#3a3a3a;letter-spacing:0.851px;">06.05.2019 12:13:40</div>
<div class="t" style="left:455.55px;top:554px;font-size:12.5px;line-height:20px;color:#3a3a3a;transform:scaleX(0.8834);transform-origin:0 0;">CRITICAL</div>
<div class="t" style="left:578.20px;top:554px;font-size:12.5px;line-height:20px;color:#3a3a3a;letter-spacing:0.600px;">Авария</div>
<div class="t" style="left:767.50px;top:554px;font-size:12.5px;line-height:20px;color:#3a3a3a;letter-spacing:0.483px;">Trap</div>
<div class="t" style="left:960.50px;top:554px;font-size:12.5px;line-height:20px;color:#3a3a3a;letter-spacing:0.779px;">Обнаружена вредоносная ТД ...</div>
<div class="t" style="left:1172.20px;top:554px;font-size:12.5px;line-height:20px;color:#3a3a3a;letter-spacing:0.776px;">1.3.6.1.4.1.35265.1.60.1.8.3....</div>
<div class="t" style="left:1373.96px;top:554px;font-size:12.5px;line-height:20px;color:#3a3a3a;letter-spacing:0.772px;">wep-509-8f85e0</div>
<div style="left:0px;top:576px;width:1573px;height:23px;background:#ffffff"></div>
<div style="left:0px;top:599px;width:1573px;height:1px;background:#808080"></div>
<div style="left:385px;top:576px;width:191px;height:23px;background:#ff0033"></div>
<div style="left:188px;top:576px;width:1px;height:24px;background:#808080"></div>
<div style="left:384px;top:576px;width:1px;height:24px;background:#808080"></div>
<div style="left:576px;top:576px;width:1px;height:24px;background:#808080"></div>
<div style="left:765px;top:576px;width:1px;height:24px;background:#808080"></div>
<div style="left:958px;top:576px;width:1px;height:24px;background:#808080"></div>
<div style="left:1170px;top:576px;width:1px;height:24px;background:#808080"></div>
<div style="left:1372px;top:576px;width:1px;height:24px;background:#808080"></div>
<div style="left:1573px;top:576px;width:1px;height:24px;background:#808080"></div>
<div class="t" style="left:1.60px;top:578px;font-size:12.5px;line-height:20px;color:#3a3a3a;letter-spacing:0.963px;">5347820</div>
<div class="t" style="left:190.80px;top:578px;font-size:12.5px;line-height:20px;color:#3a3a3a;letter-spacing:0.851px;">06.05.2019 12:13:35</div>
<div class="t" style="left:455.55px;top:578px;font-size:12.5px;line-height:20px;color:#3a3a3a;transform:scaleX(0.8834);transform-origin:0 0;">CRITICAL</div>
<div class="t" style="left:578.20px;top:578px;font-size:12.5px;line-height:20px;color:#3a3a3a;letter-spacing:0.600px;">Авария</div>
<div class="t" style="left:767.50px;top:578px;font-size:12.5px;line-height:20px;color:#3a3a3a;letter-spacing:0.483px;">Trap</div>
<div class="t" style="left:960.50px;top:578px;font-size:12.5px;line-height:20px;color:#3a3a3a;letter-spacing:0.779px;">Обнаружена вредоносная ТД ...</div>
<div class="t" style="left:1172.20px;top:578px;font-size:12.5px;line-height:20px;color:#3a3a3a;letter-spacing:0.776px;">1.3.6.1.4.1.35265.1.60.1.8.3....</div>
<div class="t" style="left:1373.96px;top:578px;font-size:12.5px;line-height:20px;color:#3a3a3a;letter-spacing:0.758px;">wep-531-4e07a0</div>
<div style="left:0px;top:600px;width:1573px;height:23px;background:#e0e0e0"></div>
<div style="left:0px;top:623px;width:1573px;height:1px;background:#808080"></div>
<div style="left:385px;top:600px;width:191px;height:23px;background:#ff0033"></div>
<div style="left:188px;top:600px;width:1px;height:24px;background:#808080"></div>
<div style="left:384px;top:600px;width:1px;height:24px;background:#808080"></div>
<div style="left:576px;top:600px;width:1px;height:24px;background:#808080"></div>
<div style="left:765px;top:600px;width:1px;height:24px;background:#808080"></div>
<div style="left:958px;top:600px;width:1px;height:24px;background:#808080"></div>
<div style="left:1170px;top:600px;width:1px;height:24px;background:#808080"></div>
<div style="left:1372px;top:600px;width:1px;height:24px;background:#808080"></div>
<div style="left:1573px;top:600px;width:1px;height:24px;background:#808080"></div>
<div class="t" style="left:1.60px;top:602px;font-size:12.5px;line-height:20px;color:#3a3a3a;letter-spacing:0.963px;">5347758</div>
<div class="t" style="left:190.80px;top:602px;font-size:12.5px;line-height:20px;color:#3a3a3a;letter-spacing:0.851px;">06.05.2019 12:12:48</div>
<div class="t" style="left:455.55px;top:602px;font-size:12.5px;line-height:20px;color:#3a3a3a;transform:scaleX(0.8834);transform-origin:0 0;">CRITICAL</div>
<div class="t" style="left:578.20px;top:602px;font-size:12.5px;line-height:20px;color:#3a3a3a;letter-spacing:0.600px;">Авария</div>
<div class="t" style="left:767.50px;top:602px;font-size:12.5px;line-height:20px;color:#3a3a3a;letter-spacing:0.483px;">Trap</div>
<div class="t" style="left:960.50px;top:602px;font-size:12.5px;line-height:20px;color:#3a3a3a;letter-spacing:0.779px;">Обнаружена вредоносная ТД ...</div>
<div class="t" style="left:1172.20px;top:602px;font-size:12.5px;line-height:20px;color:#3a3a3a;letter-spacing:0.776px;">1.3.6.1.4.1.35265.1.60.1.8.3....</div>
<div class="t" style="left:1373.96px;top:602px;font-size:12.5px;line-height:20px;color:#3a3a3a;letter-spacing:0.749px;">wep-501-4e07c0</div>
<div style="left:0px;top:624px;width:1573px;height:23px;background:#ffffff"></div>
<div style="left:0px;top:647px;width:1573px;height:1px;background:#808080"></div>
<div style="left:385px;top:624px;width:191px;height:23px;background:#ff0033"></div>
<div style="left:188px;top:624px;width:1px;height:24px;background:#808080"></div>
<div style="left:384px;top:624px;width:1px;height:24px;background:#808080"></div>
<div style="left:576px;top:624px;width:1px;height:24px;background:#808080"></div>
<div style="left:765px;top:624px;width:1px;height:24px;background:#808080"></div>
<div style="left:958px;top:624px;width:1px;height:24px;background:#808080"></div>
<div style="left:1170px;top:624px;width:1px;height:24px;background:#808080"></div>
<div style="left:1372px;top:624px;width:1px;height:24px;background:#808080"></div>
<div style="left:1573px;top:624px;width:1px;height:24px;background:#808080"></div>
<div class="t" style="left:1.60px;top:626px;font-size:12.5px;line-height:20px;color:#3a3a3a;letter-spacing:0.963px;">5347689</div>
<div class="t" style="left:190.80px;top:626px;font-size:12.5px;line-height:20px;color:#3a3a3a;letter-spacing:0.851px;">06.05.2019 12:12:04</div>
<div class="t" style="left:455.55px;top:626px;font-size:12.5px;line-height:20px;color:#3a3a3a;transform:scaleX(0.8834);transform-origin:0 0;">CRITICAL</div>
<div class="t" style="left:578.20px;top:626px;font-size:12.5px;line-height:20px;color:#3a3a3a;letter-spacing:0.600px;">Авария</div>
<div class="t" style="left:767.50px;top:626px;font-size:12.5px;line-height:20px;color:#3a3a3a;letter-spacing:0.483px;">Trap</div>
<div class="t" style="left:960.50px;top:626px;font-size:12.5px;line-height:20px;color:#3a3a3a;letter-spacing:0.779px;">Обнаружена вредоносная ТД ...</div>
<div class="t" style="left:1172.20px;top:626px;font-size:12.5px;line-height:20px;color:#3a3a3a;letter-spacing:0.776px;">1.3.6.1.4.1.35265.1.60.1.8.3....</div>
<div class="t" style="left:1373.96px;top:626px;font-size:12.5px;line-height:20px;color:#3a3a3a;letter-spacing:0.758px;">wep-522-4e60a0</div>
<div style="left:0px;top:648px;width:1573px;height:23px;background:#e0e0e0"></div>
<div style="left:0px;top:671px;width:1573px;height:1px;background:#808080"></div>
<div style="left:385px;top:648px;width:191px;height:23px;background:#ff0033"></div>
<div style="left:188px;top:648px;width:1px;height:24px;background:#808080"></div>
<div style="left:384px;top:648px;width:1px;height:24px;background:#808080"></div>
<div style="left:576px;top:648px;width:1px;height:24px;background:#808080"></div>
<div style="left:765px;top:648px;width:1px;height:24px;background:#808080"></div>
<div style="left:958px;top:648px;width:1px;height:24px;background:#808080"></div>
<div style="left:1170px;top:648px;width:1px;height:24px;background:#808080"></div>
<div style="left:1372px;top:648px;width:1px;height:24px;background:#808080"></div>
<div style="left:1573px;top:648px;width:1px;height:24px;background:#808080"></div>
<div class="t" style="left:1.60px;top:650px;font-size:12.5px;line-height:20px;color:#3a3a3a;letter-spacing:0.963px;">5347681</div>
<div class="t" style="left:190.80px;top:650px;font-size:12.5px;line-height:20px;color:#3a3a3a;letter-spacing:0.903px;">06.05.2019 12:11:58</div>
<div class="t" style="left:455.55px;top:650px;font-size:12.5px;line-height:20px;color:#3a3a3a;transform:scaleX(0.8834);transform-origin:0 0;">CRITICAL</div>
<div class="t" style="left:578.20px;top:650px;font-size:12.5px;line-height:20px;color:#3a3a3a;letter-spacing:0.600px;">Авария</div>
<div class="t" style="left:767.50px;top:650px;font-size:12.5px;line-height:20px;color:#3a3a3a;letter-spacing:0.483px;">Trap</div>
<div class="t" style="left:960.50px;top:650px;font-size:12.5px;line-height:20px;color:#3a3a3a;letter-spacing:0.779px;">Обнаружена вредоносная ТД ...</div>
<div class="t" style="left:1172.20px;top:650px;font-size:12.5px;line-height:20px;color:#3a3a3a;letter-spacing:0.776px;">1.3.6.1.4.1.35265.1.60.1.8.3....</div>
<div class="t" style="left:1373.96px;top:650px;font-size:12.5px;line-height:20px;color:#3a3a3a;letter-spacing:0.774px;">wep-532-4e0000</div>
<div style="left:0px;top:672px;width:1573px;height:23px;background:#ffffff"></div>
<div style="left:0px;top:695px;width:1573px;height:1px;background:#808080"></div>
<div style="left:385px;top:672px;width:191px;height:23px;background:#ff0033"></div>
<div style="left:188px;top:672px;width:1px;height:24px;background:#808080"></div>
<div style="left:384px;top:672px;width:1px;height:24px;background:#808080"></div>
<div style="left:576px;top:672px;width:1px;height:24px;background:#808080"></div>
<div style="left:765px;top:672px;width:1px;height:24px;background:#808080"></div>
<div style="left:958px;top:672px;width:1px;height:24px;background:#808080"></div>
<div style="left:1170px;top:672px;width:1px;height:24px;background:#808080"></div>
<div style="left:1372px;top:672px;width:1px;height:24px;background:#808080"></div>
<div style="left:1573px;top:672px;width:1px;height:24px;background:#808080"></div>
<div class="t" style="left:1.60px;top:674px;font-size:12.5px;line-height:20px;color:#3a3a3a;letter-spacing:0.963px;">5347614</div>
<div class="t" style="left:190.80px;top:674px;font-size:12.5px;line-height:20px;color:#3a3a3a;letter-spacing:0.903px;">06.05.2019 12:11:08</div>
<div class="t" style="left:455.55px;top:674px;font-size:12.5px;line-height:20px;color:#3a3a3a;transform:scaleX(0.8834);transform-origin:0 0;">CRITICAL</div>
<div class="t" style="left:578.20px;top:674px;font-size:12.5px;line-height:20px;color:#3a3a3a;letter-spacing:0.600px;">Авария</div>
<div class="t" style="left:767.50px;top:674px;font-size:12.5px;line-height:20px;color:#3a3a3a;letter-spacing:1.188px;">Монитор</div>
<div class="t" style="left:960.50px;top:674px;font-size:12.5px;line-height:20px;color:#3a3a3a;letter-spacing:1.039px;">AP location root не соответст...</div>
<div class="t" style="left:1172.20px;top:674px;font-size:12.5px;line-height:20px;color:#3a3a3a;letter-spacing:0.853px;">1.3.6.1.4.1.35265.2.1.1.1.35</div>
<div class="t" style="left:1373.90px;top:674px;font-size:12.5px;line-height:20px;color:#3a3a3a;letter-spacing:0.774px;">portal_group</div>
<div style="left:0px;top:696px;width:1573px;height:23px;background:#e0e0e0"></div>
<div style="left:0px;top:719px;width:1573px;height:1px;background:#808080"></div>
<div style="left:385px;top:696px;width:191px;height:23px;background:#ff9933"></div>
<div style="left:188px;top:696px;width:1px;height:24px;background:#808080"></div>
<div style="left:384px;top:696px;width:1px;height:24px;background:#808080"></div>
<div style="left:576px;top:696px;width:1px;height:24px;background:#808080"></div>
<div style="left:765px;top:696px;width:1px;height:24px;background:#808080"></div>
<div style="left:958px;top:696px;width:1px;height:24px;background:#808080"></div>
<div style="left:1170px;top:696px;width:1px;height:24px;background:#808080"></div>
<div style="left:1372px;top:696px;width:1px;height:24px;background:#808080"></div>
<div style="left:1573px;top:696px;width:1px;height:24px;background:#808080"></div>
<div class="t" style="left:1.60px;top:698px;font-size:12.5px;line-height:20px;color:#3a3a3a;letter-spacing:0.963px;">5347613</div>
<div class="t" style="left:190.80px;top:698px;font-size:12.5px;line-height:20px;color:#3a3a3a;letter-spacing:0.903px;">06.05.2019 12:11:08</div>
<div class="t" style="left:461.55px;top:698px;font-size:12.5px;line-height:20px;color:#3a3a3a;transform:scaleX(0.8754);transform-origin:0 0;">MAJOR</div>
<div class="t" style="left:578.20px;top:698px;font-size:12.5px;line-height:20px;color:#3a3a3a;letter-spacing:0.600px;">Авария</div>
<div class="t" style="left:767.50px;top:698px;font-size:12.5px;line-height:20px;color:#3a3a3a;letter-spacing:1.188px;">Монитор</div>
<div class="t" style="left:960.50px;top:698px;font-size:12.5px;line-height:20px;color:#3a3a3a;letter-spacing:0.904px;">На точке не настроен Roami...</div>
<div class="t" style="left:1172.20px;top:698px;font-size:12.5px;line-height:20px;color:#3a3a3a;letter-spacing:0.695px;">1.3.6.1.4.1.35265.2.1.1.1.36</div>
<div class="t" style="left:1373.96px;top:698px;font-size:12.5px;line-height:20px;color:#3a3a3a;letter-spacing:0.763px;">wep-415-170220</div>
<div style="left:0px;top:720px;width:1573px;height:23px;background:#ffffff"></div>
<div style="left:0px;top:743px;width:1573px;height:1px;background:#808080"></div>
<div style="left:385px;top:720px;width:191px;height:23px;background:#ff9933"></div>
<div style="left:188px;top:720px;width:1px;height:24px;background:#808080"></div>
<div style="left:384px;top:720px;width:1px;height:24px;background:#808080"></div>
<div style="left:576px;top:720px;width:1px;height:24px;background:#808080"></div>
<div style="left:765px;top:720px;width:1px;height:24px;background:#808080"></div>
<div style="left:958px;top:720px;width:1px;height:24px;background:#808080"></div>
<div style="left:1170px;top:720px;width:1px;height:24px;background:#808080"></div>
<div style="left:1372px;top:720px;width:1px;height:24px;background:#808080"></div>
<div style="left:1573px;top:720px;width:1px;height:24px;background:#808080"></div>
<div class="t" style="left:1.60px;top:722px;font-size:12.5px;line-height:20px;color:#3a3a3a;letter-spacing:0.963px;">5347595</div>
<div class="t" style="left:190.80px;top:722px;font-size:12.5px;line-height:20px;color:#3a3a3a;letter-spacing:0.903px;">06.05.2019 12:11:00</div>
<div class="t" style="left:461.55px;top:722px;font-size:12.5px;line-height:20px;color:#3a3a3a;transform:scaleX(0.8754);transform-origin:0 0;">MAJOR</div>
<div class="t" style="left:578.20px;top:722px;font-size:12.5px;line-height:20px;color:#3a3a3a;letter-spacing:0.600px;">Авария</div>
<div class="t" style="left:767.50px;top:722px;font-size:12.5px;line-height:20px;color:#3a3a3a;letter-spacing:1.188px;">Монитор</div>
<div class="t" style="left:960.50px;top:722px;font-size:12.5px;line-height:20px;color:#3a3a3a;letter-spacing:0.555px;">SSID Eltex-Guest@ap.hotspot.s...</div>
<div class="t" style="left:1172.20px;top:722px;font-size:12.5px;line-height:20px;color:#3a3a3a;letter-spacing:0.695px;">1.3.6.1.4.1.35265.2.1.1.1.34</div>
<div class="t" style="left:1373.96px;top:722px;font-size:12.5px;line-height:20px;color:#3a3a3a;letter-spacing:0.743px;">wep-416-8f9020</div>
<div style="left:0px;top:744px;width:1573px;height:23px;background:#e0e0e0"></div>
<div style="left:0px;top:767px;width:1573px;height:1px;background:#808080"></div>
<div style="left:385px;top:744px;width:191px;height:23px;background:#ff9933"></div>
<div style="left:188px;top:744px;width:1px;height:24px;background:#808080"></div>
<div style="left:384px;top:744px;width:1px;height:24px;background:#808080"></div>
<div style="left:576px;top:744px;width:1px;height:24px;background:#808080"></div>
<div style="left:765px;top:744px;width:1px;height:24px;background:#808080"></div>
<div style="left:958px;top:744px;width:1px;height:24px;background:#808080"></div>
<div style="left:1170px;top:744px;width:1px;height:24px;background:#808080"></div>
<div style="left:1372px;top:744px;width:1px;height:24px;background:#808080"></div>
<div style="left:1573px;top:744px;width:1px;height:24px;background:#808080"></div>
<div class="t" style="left:1.60px;top:746px;font-size:12.5px;line-height:20px;color:#3a3a3a;letter-spacing:0.963px;">5347594</div>
<div class="t" style="left:190.80px;top:746px;font-size:12.5px;line-height:20px;color:#3a3a3a;letter-spacing:0.903px;">06.05.2019 12:11:00</div>
<div class="t" style="left:461.55px;top:746px;font-size:12.5px;line-height:20px;color:#3a3a3a;transform:scaleX(0.8754);transform-origin:0 0;">MAJOR</div>
<div class="t" style="left:578.20px;top:746px;font-size:12.5px;line-height:20px;color:#3a3a3a;letter-spacing:0.600px;">Авария</div>
<div class="t" style="left:767.50px;top:746px;font-size:12.5px;line-height:20px;color:#3a3a3a;letter-spacing:1.188px;">Монитор</div>
<div class="t" style="left:960.50px;top:746px;font-size:12.5px;line-height:20px;color:#3a3a3a;letter-spacing:0.555px;">SSID Eltex-Guest@ap.hotspot.s...</div>
<div class="t" style="left:1172.20px;top:746px;font-size:12.5px;line-height:20px;color:#3a3a3a;letter-spacing:0.695px;">1.3.6.1.4.1.35265.2.1.1.1.34</div>
<div class="t" style="left:1373.96px;top:746px;font-size:12.5px;line-height:20px;color:#3a3a3a;letter-spacing:0.743px;">wep-416-8f9020</div>
</div>
<div style="left:1880px;top:236px;width:17px;height:761px;background:#eeeeee;border-left:1px solid #808080"></div>
<div style="left:1881px;top:236px;width:16px;height:16px;background:#f2f2f2;border:1px solid #d8d8d8"></div>
<svg style="position:absolute;left:1883px;top:240px" width="12" height="8" viewBox="0 0 12 8"><path d="M1 6.5 L6 1.5 L11 6.5 Z" fill="#222"/></svg>
<div style="left:1881px;top:251px;width:16px;height:231px;border:1px solid #6f8ed0;border-right-color:#a8bcd8;background:linear-gradient(90deg,#d8e4f2,#ffffff 30%,#c8d8ec 75%,#b8cce4)"></div>
<div style="left:1885px;top:363px;width:9px;height:1px;background:#5a7ac0"></div>
<div style="left:1885px;top:365px;width:9px;height:1px;background:#5a7ac0"></div>
<div style="left:1885px;top:367px;width:9px;height:1px;background:#5a7ac0"></div>
<div style="left:1881px;top:981px;width:16px;height:16px;background:#f2f2f2;border:1px solid #d8d8d8"></div>
<svg style="position:absolute;left:1883px;top:985px" width="12" height="8" viewBox="0 0 12 8"><path d="M1 1.5 L6 6.5 L11 1.5 Z" fill="#222"/></svg>
<div style="left:306px;top:997px;width:1591px;height:1px;background:#7a8a99"></div>
<div style="left:305px;top:998px;width:1592px;height:1px;background:#fff"></div>
<div style="left:298px;top:1012px;width:1619px;height:9px;background:#eeeeee;border-top:1px solid #fff"></div>
<svg style="position:absolute;left:298px;top:1012px" width="1619" height="9" viewBox="298 1012 1619 9">
<defs><pattern id="dh" x="0" y="0" width="4" height="4" patternUnits="userSpaceOnUse">
<rect x="2" y="0" width="1" height="1" fill="#6a7a8a"/><rect x="3" y="1" width="1" height="1" fill="#ffffff"/>
<rect x="0" y="2" width="1" height="1" fill="#6a7a8a"/><rect x="1" y="3" width="1" height="1" fill="#ffffff"/></pattern></defs>
<rect x="310" y="1016" width="1600" height="4" fill="url(#dh)"/>
<path d="M302 1018 L306 1014 L310 1018 Z" fill="#5a7cc0"/><path d="M302 1018 L306 1014" stroke="#111" stroke-width="0.9"/>
<path d="M314 1014 L322 1014 L318 1018 Z" fill="#5a7cc0"/><path d="M314 1014.3 L322 1014.3" stroke="#111" stroke-width="0.9"/>
</svg>
<div style="left:298px;top:1021px;width:1619px;height:1px;background:#7a8a99"></div>
<div style="left:296px;top:1012px;width:2px;height:38px;background:#7a8a99"></div>
<div style="left:298px;top:1022px;width:1619px;height:21px;background:#e9ad88"></div>
<svg style="position:absolute;left:299px;top:1021px" width="90" height="29" viewBox="299 1021 90 29">
<path d="M301.5 1043 L301.5 1031 L308 1024.5 L375.5 1024.5 L375.5 1043" fill="#c8dcf1" stroke="#5f80c6" stroke-width="1"/>
<path d="M302.5 1043 L302.5 1031.5 L308.5 1025.5 L374.5 1025.5" fill="none" stroke="#fff" stroke-width="1"/></svg>
<div style="left:299px;top:1042px;width:1618px;height:6px;background:#c8dcf1;border-top:1px solid #5f80c6;border-left:1px solid #5f80c6"></div>
<div style="left:302px;top:1042px;width:73px;height:2px;background:#c8dcf1"></div>
<div style="left:303px;top:1043px;width:1px;height:2px;background:#fff"></div>
<div style="left:376px;top:1043px;width:1540px;height:1px;background:#fff"></div>
<div style="left:299px;top:1047px;width:1618px;height:1px;background:#7a8a99"></div>
<div style="left:299px;top:1048px;width:1618px;height:1px;background:#fff"></div>
<div style="left:299px;top:1049px;width:1618px;height:1px;background:#7a8a99"></div>
<div class="t" style="left:312.00px;top:1024px;font-size:13px;line-height:20px;color:#222;letter-spacing:1.724px;">Задачи</div>
</div></body></html>
